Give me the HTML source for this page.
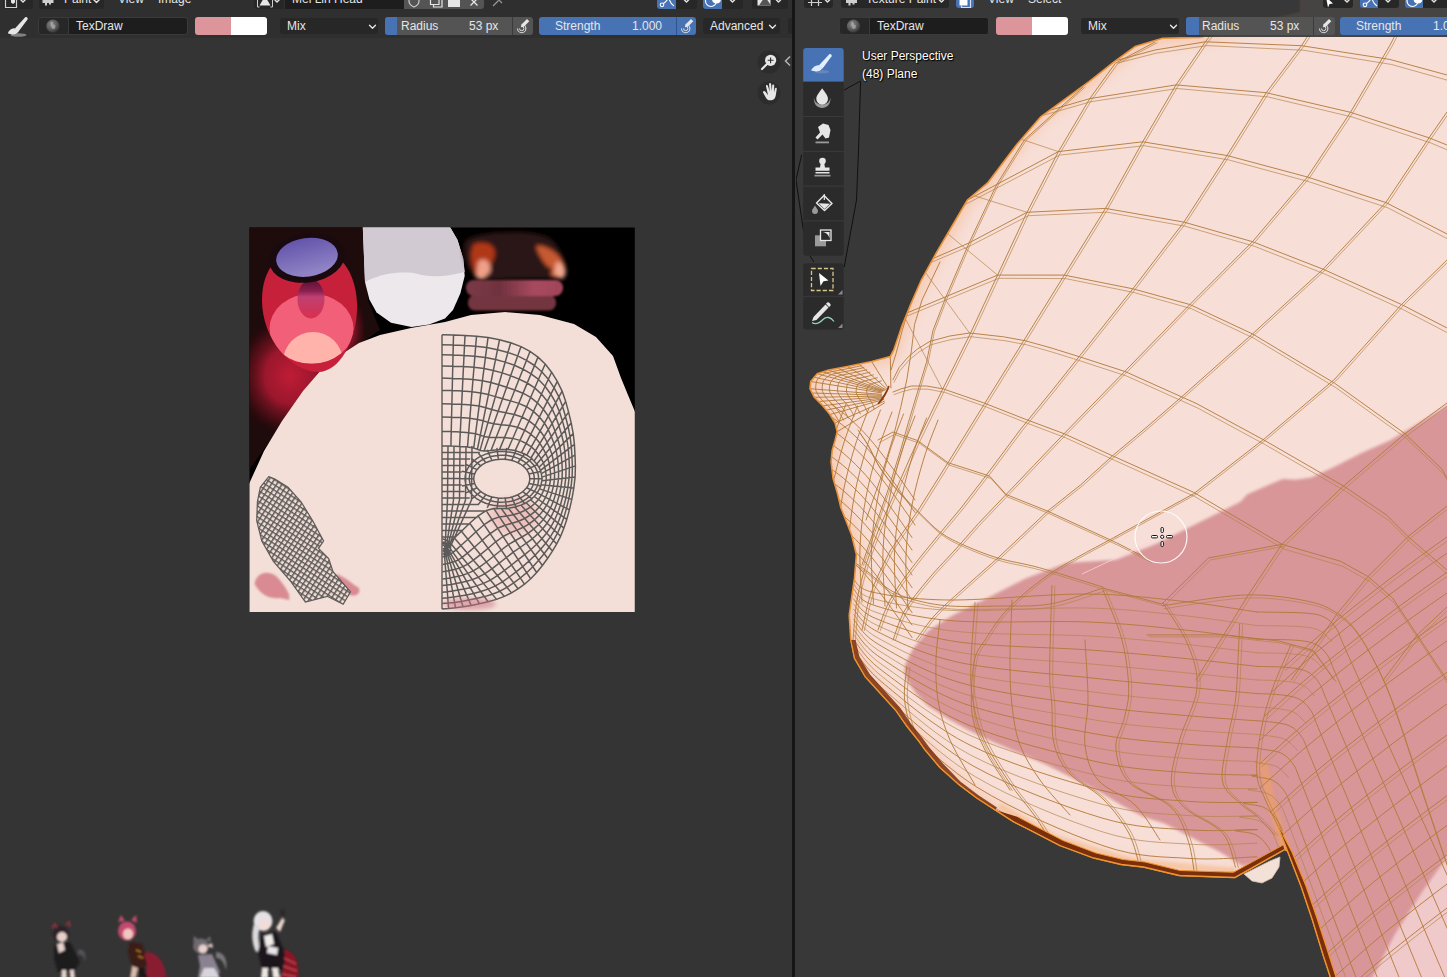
<!DOCTYPE html>
<html><head><meta charset="utf-8">
<style>
*{box-sizing:border-box;margin:0;padding:0}
html,body{width:1447px;height:977px;overflow:hidden;background:#383838;font-family:"Liberation Sans",sans-serif;font-size:12px;color:#e6e6e6}
.abs{position:absolute}
#left{position:absolute;left:0;top:0;width:792px;height:977px;background:#343434;overflow:hidden}
#right{position:absolute;left:796px;top:0;width:651px;height:977px;background:#383838;overflow:hidden}
#divider{position:absolute;left:791.6px;top:0;width:3.3px;height:977px;background:#161616}
.hdr{position:absolute;left:0;top:0;height:37.5px;background:#2f2f2f}
.w{position:absolute;border-radius:3px;white-space:nowrap;line-height:18px;height:18px;top:17px}
.dk{background:#1d1d1d}
.md{background:#272727}
.gr{background:#545454}
.bl{background:#4772b3}
.t{position:absolute;white-space:nowrap;line-height:14px}
svg{position:absolute;overflow:visible}
</style></head><body>
<div id="left">
<svg id="uv" style="left:0;top:0" width="792" height="977" viewBox="0 0 792 977">
<defs>
<clipPath id="uvclip"><rect x="249.5" y="227.5" width="385.3" height="384.5"/></clipPath>
<radialGradient id="glow" cx="0.5" cy="0.5" r="0.5"><stop offset="0" stop-color="#c01c36" stop-opacity="1"/><stop offset="0.45" stop-color="#a81830" stop-opacity="0.9"/><stop offset="0.75" stop-color="#70101c" stop-opacity="0.5"/><stop offset="1" stop-color="#300008" stop-opacity="0"/></radialGradient>
<linearGradient id="purp" x1="0" y1="0" x2="0.2" y2="1"><stop offset="0" stop-color="#5f50a8"/><stop offset="1" stop-color="#9184c6"/></linearGradient>
<linearGradient id="pupil" x1="0" y1="0" x2="0" y2="1"><stop offset="0" stop-color="#5a1030"/><stop offset="0.3" stop-color="#8a2050"/><stop offset="0.45" stop-color="#c04070"/><stop offset="1" stop-color="#d8304e"/></linearGradient>
<linearGradient id="lip1" x1="0" y1="0" x2="1" y2="0"><stop offset="0" stop-color="#7a3a48"/><stop offset="0.35" stop-color="#70323e"/><stop offset="0.7" stop-color="#a84a60"/><stop offset="1" stop-color="#a04458"/></linearGradient>
<clipPath id="pinkclip"><ellipse cx="311.500" cy="328.600" rx="42" ry="35"/></clipPath>
<clipPath id="irisclip"><path d="M309.5 248 C345 248 358 280 357 310 C356 340 340 372 318 372 C292 372 262 340 262 300 C262 268 280 248 309.5 248Z"/></clipPath>
<pattern id="grid" width="4.5" height="4.5" patternUnits="userSpaceOnUse" patternTransform="rotate(33)"><rect width="4.5" height="4.5" fill="#efdcd4"/><path d="M0 0.7H4.5M0.7 0V4.5" stroke="#5c5a58" stroke-width="1.5"/></pattern>
<pattern id="grid2" width="6.4" height="5.6" patternUnits="userSpaceOnUse" patternTransform="rotate(-4)"><rect width="6.4" height="5.6" fill="#f0ddd5"/><path d="M0 0.6H6.4M0.6 0V5.6" stroke="#5c5a58" stroke-width="1.25"/></pattern>
<filter id="b2"><feGaussianBlur stdDeviation="2"/></filter>
<filter id="b4"><feGaussianBlur stdDeviation="4"/></filter>
<filter id="b1"><feGaussianBlur stdDeviation="0.8"/></filter>
</defs>
<g clip-path="url(#uvclip)">
<rect x="249" y="227" width="387" height="386" fill="#000"/>
<!-- dark brown area behind eye -->
<path d="M249 227H364L368 300L380 330L320 372L249 470Z" fill="#1e0b0c"/>
<!-- red glow -->
<ellipse cx="290" cy="376" rx="56" ry="62" fill="url(#glow)"/>
<ellipse cx="345" cy="330" rx="22" ry="40" fill="url(#glow)" opacity="0.7"/>
<!-- skin -->
<path d="M249 484 L264 451 L282 421 L303 391 L322 369 L342 354 L359 343 L380 335 L411 328 L445 322 L471 315 L505 312 L540 315 L574 324 L596 337 L613 356 L621 378 L628 395 L636 414 V614 H249Z" fill="#f3dfd8"/>
<!-- eye -->
<g clip-path="url(#irisclip)">
<rect x="255" y="240" width="110" height="140" fill="#c6203a"/>
<ellipse cx="311.500" cy="328.600" rx="42" ry="35" fill="#f25f78"/>
<g clip-path="url(#pinkclip)"><circle cx="313" cy="362" r="30" fill="#ffb3aa"/></g>
</g>
<ellipse cx="311" cy="299" rx="13.5" ry="19.5" fill="url(#pupil)"/>
<ellipse cx="307" cy="258" rx="38" ry="24.5" fill="#190a10" transform="rotate(-8 307 258)"/>
<ellipse cx="307" cy="257.3" rx="31" ry="19.3" fill="url(#purp)" transform="rotate(-8 307 257.3)"/>
<!-- white shape -->
<path d="M362.8 227 L365 282 L369.4 299.4 L376.6 312.5 L391 322.7 L411.5 327 L429 324.5 L445 318.5 L453 310 L460.3 293.6 L464.7 276 L463.3 258.7 L457.4 239.8 L450 227Z" fill="#ece8ec"/>
<path d="M362.8 227 L365 282 C385 272 400 272 414 273 C430 278 445 277 464.7 272 L463.3 258.7 L457.4 239.8 L450 227Z" fill="#d2cad2"/>
<!-- brown hair piece -->
<g filter="url(#b2)">
<path d="M466 240 C480 230 540 228 552 240 C565 252 568 270 562 278 L478 280 C466 270 460 250 466 240Z" fill="#2c1412"/>
<path d="M474 244 C488 240 498 246 494 258 C488 270 486 280 478 278 C472 270 468 252 474 244Z" fill="#b03818"/>
<path d="M478 262 C484 256 492 262 490 272 L482 280 L476 276Z" fill="#f0a088"/>
<path d="M536 246 C548 244 566 258 566 272 C564 280 556 280 550 274 C546 262 538 256 536 246Z" fill="#c85a30"/>
<path d="M556 262 C566 262 568 276 562 279 L554 274Z" fill="#f0a890"/>
<path d="M542 262 L553 270 L550 274 L541 268Z" fill="#2c1412"/>
</g>
<!-- lips stripes -->
<g filter="url(#b1)">
<rect x="468" y="295" width="88" height="15.5" rx="7" fill="#73353f"/>
<rect x="466" y="280" width="97" height="16" rx="7.5" fill="url(#lip1)"/>
</g>
<!-- face UV -->
<ellipse cx="514" cy="516" rx="24" ry="18" fill="#e8a0a0" opacity="0.5" filter="url(#b4)"/>
<path d="M442 334.7V609" stroke="#5c5a58" stroke-width="1.4"/>
<path d="M442.0 446.0 L450.9 446.1 L459.6 446.4 L467.5 447.1 L473.7 448.1 L477.4 449.3 L480.0 450.4 L484.1 450.9 L491.0 450.5 L499.5 449.6 L507.9 449.5 L515.2 450.6 L521.5 452.7 L526.8 455.2 L530.9 458.0 L534.0 461.0 L536.8 464.1 L539.0 467.2 L540.4 470.4 L541.3 473.7 L541.9 477.1 L541.9 480.7 L541.0 484.7 L539.5 488.9 L537.2 492.9 L534.2 496.5 L530.5 499.8 L526.1 502.7 L520.9 505.1 L514.9 507.0 L508.4 508.2 L501.3 508.5 L493.9 508.6 L486.2 510.6 L478.1 515.8 L469.7 523.3 L461.4 531.2 L454.4 537.9 L450.0 542.5 L447.8 545.1 L446.6 546.3 L446.0 547.0 L445.5 547.5 L444.8 548.0 L444.0 548.5 L443.0 549.0 M442.0 431.5 L451.3 431.6 L460.3 432.0 L468.7 432.7 L475.5 433.7 L480.2 435.1 L484.0 436.4 L488.9 437.3 L496.1 437.6 L504.5 437.6 L512.7 438.4 L519.9 440.4 L526.2 443.5 L531.4 446.9 L535.4 450.7 L538.5 454.7 L541.2 458.7 L543.4 462.8 L544.8 467.0 L545.7 471.3 L546.2 475.6 L546.2 480.2 L545.3 485.1 L543.7 490.2 L541.4 495.1 L538.5 499.5 L534.9 503.4 L530.6 507.0 L525.5 510.1 L519.7 512.8 L513.5 514.8 L506.7 515.9 L499.5 516.9 L492.0 519.5 L484.1 524.7 L476.0 531.8 L467.9 539.2 L460.9 545.5 L456.1 549.9 L453.0 552.4 L450.9 553.8 L449.3 554.6 L447.8 555.2 L446.2 555.8 L444.6 556.3 L442.9 556.8 M442.0 417.1 L451.6 417.2 L461.0 417.6 L469.9 418.3 L477.4 419.4 L483.1 420.8 L488.0 422.4 L493.7 423.8 L501.1 424.7 L509.5 425.6 L517.6 427.2 L524.6 430.2 L530.8 434.2 L536.0 438.6 L539.9 443.3 L543.0 448.3 L545.7 453.4 L547.9 458.5 L549.2 463.6 L550.1 468.9 L550.6 474.2 L550.5 479.7 L549.5 485.6 L547.9 491.6 L545.6 497.3 L542.7 502.4 L539.2 507.1 L535.1 511.4 L530.2 515.2 L524.6 518.5 L518.6 521.3 L512.0 523.3 L505.0 525.2 L497.7 528.3 L490.2 533.6 L482.3 540.3 L474.4 547.2 L467.4 553.1 L462.1 557.3 L458.2 559.8 L455.2 561.3 L452.5 562.2 L450.0 562.9 L447.6 563.5 L445.2 564.1 L442.7 564.6 M442.0 403.7 L451.9 403.9 L461.7 404.3 L470.9 405.0 L479.1 406.1 L485.8 407.7 L491.7 409.5 L498.1 411.3 L505.8 412.8 L514.2 414.5 L522.1 417.0 L529.0 420.8 L535.1 425.6 L540.2 430.9 L544.1 436.5 L547.1 442.4 L549.8 448.4 L552.0 454.4 L553.3 460.5 L554.1 466.6 L554.6 472.8 L554.5 479.2 L553.5 486.0 L551.7 492.9 L549.5 499.4 L546.6 505.2 L543.2 510.5 L539.2 515.4 L534.5 519.8 L529.1 523.8 L523.3 527.3 L516.9 530.1 L510.2 532.8 L503.1 536.5 L495.7 541.8 L488.1 548.2 L480.4 554.6 L473.4 560.2 L467.7 564.1 L463.0 566.6 L459.1 568.1 L455.5 569.2 L452.1 570.0 L448.9 570.7 L445.7 571.3 L442.6 571.8 M442.0 390.4 L452.2 390.6 L462.3 391.0 L472.0 391.7 L480.8 392.9 L488.4 394.6 L495.4 396.6 L502.6 398.7 L510.5 400.9 L518.8 403.4 L526.5 406.7 L533.4 411.4 L539.4 417.0 L544.5 423.2 L548.3 429.7 L551.3 436.6 L554.0 443.5 L556.1 450.4 L557.4 457.4 L558.2 464.4 L558.6 471.5 L558.5 478.8 L557.4 486.4 L555.6 494.1 L553.3 501.4 L550.5 508.0 L547.2 513.9 L543.4 519.5 L538.8 524.5 L533.6 529.1 L528.0 533.3 L521.9 537.0 L515.3 540.5 L508.4 544.7 L501.3 550.0 L493.9 556.0 L486.4 562.0 L479.4 567.2 L473.2 570.9 L467.9 573.4 L463.0 575.0 L458.5 576.2 L454.2 577.1 L450.2 577.9 L446.3 578.5 L442.5 579.0 M442.0 378.1 L452.5 378.4 L462.9 378.8 L473.0 379.5 L482.4 380.7 L490.9 382.5 L498.7 384.8 L506.6 387.3 L514.8 390.0 L523.0 393.2 L530.6 397.3 L537.4 402.8 L543.3 409.2 L548.3 416.1 L552.1 423.5 L555.1 431.2 L557.7 438.9 L559.9 446.7 L561.1 454.5 L561.9 462.4 L562.3 470.3 L562.1 478.4 L561.0 486.8 L559.2 495.3 L556.9 503.3 L554.1 510.5 L550.9 517.1 L547.1 523.2 L542.7 528.7 L537.8 533.9 L532.3 538.8 L526.4 543.2 L520.0 547.5 L513.3 552.2 L506.4 557.5 L499.2 563.2 L491.9 568.8 L484.9 573.6 L478.4 577.2 L472.3 579.6 L466.6 581.3 L461.3 582.6 L456.2 583.6 L451.3 584.4 L446.8 585.1 L442.4 585.6 M442.0 365.9 L452.8 366.2 L463.5 366.6 L474.0 367.3 L484.0 368.6 L493.3 370.5 L502.1 372.9 L510.7 375.8 L519.1 379.1 L527.2 383.0 L534.7 387.9 L541.4 394.1 L547.3 401.3 L552.2 409.1 L555.9 417.3 L558.9 425.8 L561.5 434.4 L563.6 443.0 L564.9 451.6 L565.6 460.3 L566.0 469.0 L565.8 477.9 L564.6 487.2 L562.7 496.4 L560.4 505.2 L557.7 513.0 L554.5 520.2 L550.9 526.9 L546.7 533.0 L541.9 538.8 L536.7 544.3 L530.9 549.5 L524.7 554.6 L518.2 559.7 L511.5 565.0 L504.5 570.4 L497.4 575.6 L490.4 580.1 L483.5 583.4 L476.7 585.9 L470.3 587.7 L464.0 589.0 L458.1 590.1 L452.5 591.0 L447.3 591.7 L442.3 592.2 M442.0 354.7 L453.0 355.1 L464.0 355.5 L474.9 356.2 L485.4 357.5 L495.5 359.5 L505.2 362.1 L514.4 365.3 L523.0 369.2 L531.1 373.8 L538.5 379.4 L545.0 386.3 L550.8 394.2 L555.7 402.7 L559.4 411.6 L562.4 420.9 L565.0 430.3 L567.0 439.6 L568.3 449.0 L569.0 458.4 L569.4 467.9 L569.1 477.6 L567.9 487.5 L566.0 497.5 L563.6 506.9 L560.9 515.3 L557.9 523.0 L554.4 530.2 L550.3 536.9 L545.7 543.2 L540.6 549.3 L535.0 555.2 L529.0 561.0 L522.7 566.6 L516.1 571.9 L509.3 577.0 L502.4 581.8 L495.4 585.9 L488.1 589.1 L480.8 591.5 L473.5 593.4 L466.6 594.9 L459.9 596.1 L453.6 597.0 L447.8 597.7 L442.2 598.2 M442.0 344.7 L453.3 345.1 L464.5 345.6 L475.7 346.3 L486.7 347.6 L497.5 349.7 L507.9 352.5 L517.7 355.9 L526.5 360.3 L534.5 365.5 L541.8 371.7 L548.3 379.2 L554.1 387.8 L558.9 396.9 L562.6 406.5 L565.5 416.5 L568.1 426.6 L570.1 436.6 L571.3 446.7 L572.0 456.8 L572.4 466.9 L572.1 477.2 L570.9 487.8 L568.9 498.4 L566.5 508.4 L563.9 517.4 L560.9 525.6 L557.5 533.2 L553.5 540.4 L549.0 547.2 L544.1 553.8 L538.7 560.3 L532.8 566.7 L526.7 572.7 L520.3 578.0 L513.7 582.9 L507.0 587.3 L499.9 591.2 L492.3 594.2 L484.4 596.6 L476.5 598.6 L468.8 600.1 L461.5 601.4 L454.6 602.4 L448.2 603.1 L442.1 603.6 M442.0 334.7 L453.5 335.1 L465.0 335.6 L476.5 336.3 L488.0 337.6 L499.5 339.8 L510.7 342.8 L521.0 346.6 L530.0 351.4 L538.0 357.1 L545.2 364.0 L551.6 372.2 L557.3 381.4 L562.1 391.1 L565.7 401.4 L568.6 412.1 L571.2 422.9 L573.2 433.6 L574.4 444.4 L575.0 455.1 L575.4 465.9 L575.1 476.9 L573.8 488.1 L571.8 499.4 L569.4 509.9 L566.8 519.4 L563.9 528.1 L560.6 536.3 L556.7 543.9 L552.4 551.1 L547.7 558.3 L542.4 565.5 L536.7 572.5 L530.7 578.8 L524.5 584.2 L518.0 588.8 L511.5 592.9 L504.4 596.4 L496.5 599.4 L488.0 601.7 L479.4 603.7 L471.1 605.4 L463.0 606.7 L455.5 607.7 L448.6 608.5 L442.0 609.0 M450.9 446.1 L453.5 335.1 M459.6 446.4 L465.0 335.6 M467.5 447.1 L476.5 336.3 M473.7 448.1 L488.0 337.6 M477.4 449.3 L499.5 339.8 M480.0 450.4 L510.7 342.8 M484.1 450.9 L521.0 346.6 M491.0 450.5 L530.0 351.4 M499.5 449.6 L538.0 357.1 M507.9 449.5 L545.2 364.0 M515.2 450.6 L551.6 372.2 M521.5 452.7 L557.3 381.4 M526.8 455.2 L562.1 391.1 M530.9 458.0 L565.7 401.4 M534.0 461.0 L568.6 412.1 M536.8 464.1 L571.2 422.9 M539.0 467.2 L573.2 433.6 M540.4 470.4 L574.4 444.4 M541.3 473.7 L575.0 455.1 M541.9 477.1 L575.4 465.9 M541.9 480.7 L575.1 476.9 M541.0 484.7 L573.8 488.1 M539.5 488.9 L571.8 499.4 M537.2 492.9 L569.4 509.9 M534.2 496.5 L566.8 519.4 M530.5 499.8 L563.9 528.1 M526.1 502.7 L560.6 536.3 M520.9 505.1 L556.7 543.9 M514.9 507.0 L552.4 551.1 M508.4 508.2 L547.7 558.3 M501.3 508.5 L542.4 565.5 M493.9 508.6 L536.7 572.5 M486.2 510.6 L530.7 578.8 M478.1 515.8 L524.5 584.2 M469.7 523.3 L518.0 588.8 M461.4 531.2 L511.5 592.9 M454.4 537.9 L504.4 596.4 M450.0 542.5 L496.5 599.4 M447.8 545.1 L488.0 601.7 M446.6 546.3 L479.4 603.7 M446.0 547.0 L471.1 605.4 M445.5 547.5 L463.0 606.7 M444.8 548.0 L455.5 607.7 M444.0 548.5 L448.6 608.5 M529.8 478.7 L529.6 480.8 L529.2 482.8 L528.4 484.8 L527.3 486.8 L525.9 488.6 L524.3 490.3 L522.4 491.9 L520.2 493.4 L517.9 494.7 L515.4 495.8 L512.7 496.7 L509.9 497.4 L507.0 497.9 L504.0 498.1 L501.1 498.2 L498.1 498.0 L495.2 497.6 L492.3 497.0 L489.6 496.2 L486.9 495.2 L484.5 494.0 L482.3 492.7 L480.2 491.1 L478.5 489.5 L477.0 487.7 L475.7 485.8 L474.8 483.8 L474.2 481.8 L473.8 479.7 L473.8 477.7 L474.2 475.6 L474.8 473.6 L475.7 471.6 L477.0 469.7 L478.5 467.9 L480.2 466.3 L482.3 464.7 L484.5 463.4 L486.9 462.2 L489.6 461.2 L492.3 460.4 L495.2 459.8 L498.1 459.4 L501.1 459.2 L504.0 459.3 L507.0 459.5 L509.9 460.0 L512.7 460.7 L515.4 461.6 L517.9 462.7 L520.2 464.0 L522.4 465.5 L524.3 467.1 L525.9 468.8 L527.3 470.6 L528.4 472.6 L529.2 474.6 L529.6 476.6 L529.8 478.7Z M534.3 478.7 L534.1 481.2 L533.6 483.7 L532.7 486.1 L531.4 488.4 L529.8 490.6 L527.9 492.7 L525.7 494.6 L523.2 496.4 L520.5 497.9 L517.5 499.3 L514.4 500.4 L511.2 501.2 L507.8 501.8 L504.4 502.1 L500.9 502.2 L497.5 502.0 L494.1 501.5 L490.8 500.8 L487.6 499.8 L484.6 498.6 L481.7 497.2 L479.1 495.5 L476.8 493.7 L474.7 491.7 L473.0 489.5 L471.5 487.3 L470.4 484.9 L469.7 482.4 L469.3 480.0 L469.3 477.4 L469.7 475.0 L470.4 472.5 L471.5 470.1 L473.0 467.9 L474.7 465.7 L476.8 463.7 L479.1 461.9 L481.7 460.2 L484.6 458.8 L487.6 457.6 L490.8 456.6 L494.1 455.9 L497.5 455.4 L500.9 455.2 L504.4 455.3 L507.8 455.6 L511.2 456.2 L514.4 457.0 L517.5 458.1 L520.5 459.5 L523.2 461.0 L525.7 462.8 L527.9 464.7 L529.8 466.8 L531.4 469.0 L532.7 471.3 L533.6 473.7 L534.1 476.2 L534.3 478.7Z M538.6 478.7 L538.4 481.6 L537.8 484.5 L536.7 487.3 L535.3 490.0 L533.5 492.6 L531.3 495.0 L528.8 497.2 L526.0 499.2 L523.0 501.0 L519.6 502.6 L516.1 503.9 L512.4 504.8 L508.6 505.5 L504.7 505.9 L500.8 506.0 L496.9 505.8 L493.1 505.2 L489.3 504.4 L485.7 503.3 L482.3 501.8 L479.1 500.2 L476.1 498.3 L473.5 496.1 L471.1 493.8 L469.1 491.3 L467.5 488.6 L466.3 485.9 L465.5 483.0 L465.1 480.2 L465.1 477.2 L465.5 474.4 L466.3 471.5 L467.5 468.8 L469.1 466.1 L471.1 463.6 L473.5 461.3 L476.1 459.1 L479.1 457.2 L482.3 455.6 L485.7 454.1 L489.3 453.0 L493.1 452.2 L496.9 451.6 L500.8 451.4 L504.7 451.5 L508.6 451.9 L512.4 452.6 L516.1 453.5 L519.6 454.8 L523.0 456.4 L526.0 458.2 L528.8 460.2 L531.3 462.4 L533.5 464.8 L535.3 467.4 L536.7 470.1 L537.8 472.9 L538.4 475.8 L538.6 478.7Z M529.8 478.7 L542.8 478.7 M529.0 483.4 L541.6 486.1 M526.6 487.8 L538.1 493.1 M522.8 491.6 L532.5 499.3 M517.7 494.7 L525.1 504.2 M511.7 496.9 L516.3 507.7 M505.2 498.1 L506.7 509.5 M498.4 498.1 L496.9 509.5 M491.9 496.9 L487.3 507.7 M485.9 494.7 L478.5 504.2 M480.8 491.6 L471.1 499.3 M477.0 487.8 L465.5 493.1 M474.6 483.4 L462.0 486.1 M473.8 478.7 L460.8 478.7 M474.6 474.0 L462.0 471.3 M477.0 469.6 L465.5 464.3 M480.8 465.8 L471.1 458.1 M485.9 462.7 L478.5 453.2 M491.9 460.5 L487.3 449.7 M498.4 459.3 L496.9 447.9 M505.2 459.3 L506.7 447.9 M511.7 460.5 L516.3 449.7 M517.7 462.7 L525.1 453.2 M522.8 465.8 L532.5 458.1 M526.6 469.6 L538.1 464.3 M529.0 474.0 L541.6 471.3 M442.0 452.5 L479.9 452.5 M442.0 459.0 L470.1 459.0 M442.0 465.5 L464.7 465.5 M442.0 472.0 L461.8 472.0 M442.0 478.5 L460.8 478.5 M442.0 485.0 L461.7 485.0 M442.0 491.5 L464.5 491.5 M442.0 498.0 L469.7 498.0 M442.0 504.5 L479.1 504.5 M442.0 511.0 L484.8 511.0 M442.0 517.5 L477.6 517.5 M442.0 524.0 L470.5 524.0 M442.0 530.5 L463.4 530.5 M442.0 537.0 L456.2 537.0 M442.0 543.5 L449.1 543.5 M448.0 446.0 L447.5 500.0 L445.0 548.0 M454.0 446.0 L453.5 500.0 L446.2 548.0 M460.0 446.0 L459.5 500.0 L447.4 548.0 M466.0 446.0 L465.5 500.0 L448.6 548.0 M472.0 446.0 L471.5 500.0 L449.8 548.0 M442.5 545.0 L443.3 545.1 L444.0 545.5 L444.5 546.0 L445.0 546.8 L445.2 547.6 L445.2 548.4 L445.0 549.2 L444.5 550.0 L444.0 550.5 L443.3 550.9 L442.5 551.0 M442.5 542.0 L444.0 542.2 L445.4 543.0 L446.6 544.1 L447.4 545.5 L447.8 547.1 L447.8 548.9 L447.4 550.5 L446.6 551.9 L445.4 553.0 L444.0 553.8 L442.5 554.0 M442.5 539.0 L444.8 539.4 L446.9 540.4 L448.6 542.1 L449.9 544.3 L450.5 546.7 L450.5 549.3 L449.9 551.7 L448.6 553.9 L446.9 555.6 L444.8 556.6 L442.5 557.0" fill="none" stroke="#5c5a58" stroke-width="1.5" stroke-linejoin="round"/>
<ellipse cx="470" cy="604" rx="26" ry="6" fill="#c87080" opacity="0.5" filter="url(#b2)"/>
<!-- pink blobs -->
<path d="M254.5 584 C256 574 266 569 276 576 C282 582 286 588 289 594 L289.4 600 L280 598 C272 599 262 597 254.5 584Z" fill="#d98a92" filter="url(#b1)"/>
<path d="M336 574 C344 576 352 584 359 588 C361 594 355 598 348 594 L338 586Z" fill="#d98a92" filter="url(#b1)"/>
<!-- ear UV -->
<path d="M268.7 476.6 L274.9 479 L288 487.3 L301 501.8 L312.7 520.7 L323.6 541 L318.5 548.3 L328.7 558.5 L333 571.6 L350.5 591.9 L343.2 604.3 L327.2 596.3 L305.4 602.1 L290.9 581.7 L273.4 561.4 L261.8 541 L256.7 520.7 L257.4 501.8 L260.3 487.3Z" fill="url(#grid)" stroke="#5c5a58" stroke-width="1.2"/>
</g>
</svg>

<svg style="left:0;top:0" width="792" height="977" viewBox="0 0 792 977">
<defs><filter id="cb"><feGaussianBlur stdDeviation="0.9"/></filter></defs>
<g filter="url(#cb)">
<!-- char 1 -->
<ellipse cx="61" cy="934" rx="8" ry="8" fill="#2a2428"/>
<ellipse cx="62" cy="937" rx="5" ry="5" fill="#e8cfc8"/>
<path d="M55 944 L70 942 L80 962 L74 972 L58 972 L54 958Z" fill="#1c1a1e"/>
<path d="M57 944 l6 -2 l2 8 l-6 3z" fill="#e6d2cc"/>
<path d="M78 950 c6 -2 9 4 7 12 c-1 -6 -3 -8 -7 -7z" fill="#55505a"/>
<path d="M62 970 l4 0 l1 8 l-6 0z M70 970 l4 0 l1 8 l-5 0z" fill="#e6d2cc"/>
<path d="M52 928 l3 -4 l2 4 M66 925 l3 -3 l1 5" stroke="#a03040" stroke-width="1.500" fill="none"/>
<!-- char 2 -->
<ellipse cx="127" cy="931" rx="9" ry="9.500" fill="#c44a70"/>
<ellipse cx="128" cy="934" rx="5" ry="5.500" fill="#f0c8c0"/>
<path d="M118 922 l3 -7 l4 6 M131 920 l5 -5 l1 8" fill="#c44a70"/>
<path d="M130 942 L142 944 L148 962 L142 972 L132 966 L128 952Z" fill="#3a1a18"/>
<path d="M146 952 c12 0 20 12 20 26 l-22 0 c4 -8 4 -16 0 -22z" fill="#8a1c30"/>
<path d="M132 966 l6 2 l-2 10 l-6 0z" fill="#d8b8a8"/>
<path d="M138 968 l6 0 l4 10 l-8 0z" fill="#1e1416"/>
<path d="M136 950 l5 2 M138 956 l5 2" stroke="#d89030" stroke-width="1.200"/>
<!-- char 3 -->
<ellipse cx="201" cy="946" rx="8" ry="7.500" fill="#6e6a70"/>
<ellipse cx="203" cy="949" rx="4.500" ry="4.500" fill="#e8d0cc"/>
<path d="M193 942 l1 -6 l5 4 M206 940 l4 -4 l1 6" fill="#6e6a70"/>
<path d="M198 955 L212 954 L220 972 L216 978 L198 978 L200 966Z" fill="#8a8290"/>
<path d="M204 968 l10 0 l6 10 l-20 0z" fill="#d8d4dc"/>
<path d="M216 952 c8 0 12 8 10 18 c-2 -8 -5 -12 -10 -12z" fill="#7a767c"/>
<path d="M207 946 l5 -3 l1 5z" fill="#e8d0cc"/>
<!-- char 4 -->
<ellipse cx="263" cy="921" rx="9.500" ry="10" fill="#e4e0e4"/>
<ellipse cx="265" cy="925" rx="5" ry="5.500" fill="#f4dcd6"/>
<path d="M254 924 c-3 10 -2 20 2 28 l5 -2 c-3 -8 -3 -16 -1 -24z" fill="#dcd8dc"/>
<path d="M262 934 L276 932 L282 946 L290 960 L284 970 L262 970 L258 952Z" fill="#1a181c"/>
<path d="M264 936 l8 -2 l2 10 l-8 3z" fill="#f0ece8"/>
<path d="M268 946 l10 2 l-1 7 l-10 -2z" fill="#e8e4e8"/>
<path d="M276 928 l6 -10 l3 2 l-5 12z" fill="#e8d4cc"/>
<path d="M280 912 l3 -3 l2 4 l-2 5z" fill="#2a262a"/>
<path d="M284 950 c10 0 16 12 14 28 l-18 0 c4 -8 6 -18 4 -28z" fill="#8a1424"/>
<path d="M284 958 l12 6 M283 966 l14 5 M282 974 l14 3" stroke="#d06070" stroke-width="1"/>
<path d="M262 968 l6 0 l0 10 l-7 0z M272 968 l6 0 l2 10 l-7 0z" fill="#ece4e0"/>
</g>
</svg>

<div class="hdr" style="width:792px"></div>
<!-- top row (cropped) -->
<div class="abs md" style="left:3px;top:-8px;width:30px;height:17px;border-radius:3px"></div>
<div class="abs md" style="left:39px;top:-8px;width:65px;height:17px;border-radius:3px"></div>
<div class="t" style="left:64px;top:-8px">Paint</div>
<div class="t" style="left:118px;top:-8px">View</div>
<div class="t" style="left:158px;top:-8px">Image*</div>
<div class="abs md" style="left:254px;top:-8px;width:30px;height:17px;border-radius:3px 0 0 3px"></div>
<div class="abs dk" style="left:285px;top:-8px;width:119px;height:17px"></div>
<div class="t" style="left:292px;top:-8px">Mel Lin Head</div>
<div class="abs gr" style="left:404px;top:-8px;width:80px;height:17px;border-radius:0 3px 3px 0"></div>
<div class="abs bl" style="left:657px;top:-8px;width:19px;height:17px;border-radius:3px 0 0 3px"></div>
<div class="abs md" style="left:676px;top:-8px;width:21px;height:17px;border-radius:0 3px 3px 0"></div>
<div class="abs bl" style="left:703px;top:-8px;width:19px;height:17px;border-radius:3px 0 0 3px"></div>
<div class="abs md" style="left:722px;top:-8px;width:21px;height:17px;border-radius:0 3px 3px 0"></div>
<div class="abs md" style="left:752px;top:-8px;width:36px;height:17px;border-radius:3px"></div>
<!--LTOPICONS-->
<!-- tool settings row -->
<!--BRUSHICON-->
<div class="w md" style="left:38px;width:31px;border-radius:3px 0 0 3px;border:1px solid #3a3a3a"></div>
<div class="w dk" style="left:69px;width:119px;border-radius:0 3px 3px 0;border:1px solid #3a3a3a;border-left:none"></div>
<div class="t" style="left:76px;top:19px">TexDraw</div>
<div class="w" style="left:195px;width:36px;background:#dc959b;border-radius:3px 0 0 3px"></div>
<div class="w" style="left:231px;width:36px;background:#fff;border-radius:0 3px 3px 0"></div>
<div class="w md" style="left:280px;width:98px;top:18px;height:16px"></div>
<div class="t" style="left:287px;top:19px">Mix</div>
<div class="w gr" style="left:385px;width:148px"></div>
<div class="w bl" style="left:385px;width:12px;border-radius:3px 0 0 3px"></div>
<div class="abs" style="left:512px;top:17px;width:1px;height:18px;background:#3a3a3a"></div>
<div class="t" style="left:401px;top:19px">Radius</div>
<div class="t" style="left:469px;top:19px">53 px</div>
<div class="w bl" style="left:539px;width:157px"></div>
<div class="abs" style="left:676px;top:17px;width:1px;height:18px;background:#33548a"></div>
<div class="t" style="left:555px;top:19px">Strength</div>
<div class="t" style="left:632px;top:19px">1.000</div>
<div class="w md" style="left:703px;width:77px;top:18px;height:16px"></div>
<div class="t" style="left:710px;top:19px">Advanced</div>
<div class="w md" style="left:788px;width:10px;top:18px;height:16px"></div>
<svg style="left:0;top:0" width="792" height="40" viewBox="0 0 792 40">
<defs><radialGradient id="sph" cx="0.4" cy="0.35" r="0.7"><stop offset="0" stop-color="#8a8a8a"/><stop offset="0.6" stop-color="#585858"/><stop offset="1" stop-color="#2e2e2e"/></radialGradient></defs>
<!-- brush icon -->
<ellipse cx="18.500" cy="35" rx="8" ry="1.800" fill="#8a8a8a" opacity="0.9"/>
<path d="M25.200 17.300 C26.500 16.400 28.300 18 27.500 19.400 L18.300 31.800 L14.500 29Z" fill="#e6e6e6"/>
<path d="M14.700 28.400 C11.500 28 9 30.300 7.800 33.300 C11 34.800 16.500 35.300 18.600 31.500Z" fill="#e6e6e6"/>
<!-- brush thumb -->
<circle cx="52.900" cy="26.200" r="6.600" fill="url(#sph)"/>
<path d="M50.500 22.500 l2 -1 l1 3 l2 1 l-0.500 3 l-2.500 0.500 l-1.500 -2.500z" fill="#b0b0b0" opacity="0.7"/>
<!-- chevrons -->
<g fill="none" stroke="#e6e6e6" stroke-width="1.400" stroke-linecap="round" stroke-linejoin="round">
<path d="M369.500 25.200 l3 3 l3 -3"/>
<path d="M769.500 25.200 l3 3 l3 -3"/>
<path d="M93 -1 l3.500 3.500 l3.500 -3.500"/>
<path d="M273.500 -1.500 l3.500 3.500 l3.500 -3.500"/>
<path d="M19.500 -1.500 l3.500 3.500 l3.500 -3.500"/>
<path d="M683 -1.500 l3.500 3.500 l3.500 -3.500"/>
<path d="M729 -1.500 l3.500 3.500 l3.500 -3.500"/>
<path d="M775 -1.500 l3.500 3.500 l3.500 -3.500"/>
</g>
<!-- pen/pressure icons -->
<g id="pen">
<path d="M517.500 28.500 A4.200 4.200 0 1 0 521.700 24.300" fill="none" stroke="#dcdcdc" stroke-width="1.100"/>
<path d="M519.500 28.500 A2.200 2.200 0 1 0 521.700 26.300" fill="none" stroke="#dcdcdc" stroke-width="1"/>
<path d="M520.800 27.200 L521.500 24.500 L527 19 L529.300 21.300 L523.800 26.800Z" fill="#e6e6e6"/>
</g>
<use href="#pen" x="164"/>
<!-- top row partial icons -->
<path d="M5.500 -4 v11.500 h11 v-11.500" fill="none" stroke="#cfcfcf" stroke-width="1.200"/>
<path d="M11 -3 h4 v5.500 l-2 1.500 l-2 -1.500z" fill="#e6e6e6"/>
<path d="M42.500 -2 h11 v5 h-2.500 v1.500 h-2 v-1.500 h-2 v2.500 h-2 v-2.500 h-2.500z" fill="#cfcfcf"/>
<path d="M259.500 5.500 L265 -4 L270.500 5.500Z" fill="#e6e6e6"/>
<path d="M257.500 -3 v10 h2 M272.500 -3 v10 h-2" fill="none" stroke="#cfcfcf" stroke-width="1"/>
<!-- image field buttons -->
<path d="M409 -3 v4 c0 3 2.500 5 5 6 c2.500 -1 5 -3 5 -6 v-4" fill="none" stroke="#cfcfcf" stroke-width="1.200"/>
<path d="M430.500 -3 v7.500 h8.500 v-7.500 M433.500 4.500 v2.500 h8.500 v-8" fill="none" stroke="#e6e6e6" stroke-width="1.200"/>
<rect x="448" y="-3" width="12" height="10" fill="#e6e6e6"/>
<path d="M470.500 -1.500 l7 7 M477.500 -1.500 l-7 7" stroke="#e6e6e6" stroke-width="1.300"/>
<path d="M493 6 l5.500 -5.500 M496 -3 l6 6 M497.500 -2 l4 -2" stroke="#9a9a9a" stroke-width="1.200" fill="none"/>
<!-- right side top icons -->
<circle cx="662" cy="4.800" r="1.800" fill="none" stroke="#fff" stroke-width="1.100"/>
<path d="M663.500 3.500 C667 1 668.500 -2 668.500 -4 M668.500 -4 C669 0 671 4 674 6" fill="none" stroke="#fff" stroke-width="1.100"/>
<circle cx="711" cy="1" r="5.500" fill="none" stroke="#fff" stroke-width="1.200"/>
<circle cx="716.500" cy="-1" r="4.500" fill="#fff"/>
<path d="M757.500 5.500 v-10 h13 v10z" fill="#e6e6e6"/>
<path d="M759 5.500 l6 -9 l6 9z" fill="#555"/>
</svg>
<!-- nav gizmos -->
<svg style="left:0;top:0" width="792" height="120" viewBox="0 0 792 120">
<circle cx="769" cy="62" r="11.500" fill="#2c2c2c" opacity="0.85"/>
<circle cx="769" cy="93" r="11.500" fill="#2c2c2c" opacity="0.85"/>
<circle cx="770.600" cy="60.300" r="5.600" fill="#e6e6e6"/>
<path d="M766.500 64.500 l-4.500 4.500" stroke="#e6e6e6" stroke-width="2.200" stroke-linecap="round"/>
<path d="M767.700 60.300 h5.800 M770.600 57.400 v5.800" stroke="#2c2c2c" stroke-width="1.100"/>
<path d="M786 56.500 l4.500 4.500 l-4.500 4.500" transform="rotate(180 788 61)" fill="none" stroke="#b5b5b5" stroke-width="1.500"/>
<!-- hand -->
<path d="M763 92.500 l2.800 5 c1 2 2.500 2.800 4.500 2.800 c3.500 0 5 -2 5.500 -5 l1 -6.500 c0.200 -1.300 -1.500 -1.600 -1.800 -0.300 l-1 4 l0.200 -7 c0 -1.400 -2 -1.400 -2 0 l-0.300 6 l-0.800 -7.500 c-0.200 -1.400 -2.100 -1.200 -2 0.200 l0.600 7.500 l-1.800 -6 c-0.400 -1.300 -2.200 -0.800 -1.900 0.600 l2 9 l-2.700 -3.800 c-1 -1.200 -2.800 -0.200 -2.300 1z" fill="#e6e6e6"/>
</svg>

</div>
<div id="divider"></div>
<div id="right">
<svg id="mesh" style="left:-796px;top:0" width="1447" height="977" viewBox="0 0 1447 977">
<defs>
<clipPath id="headclip"><path id="headpath" d="M1300.0 12.0 L1200.0 37.4 L1162.6 38.3 L1135.0 46.6 L1114.7 61.3 L1089.0 81.6 L1041.0 116.6 L1017.0 144.2 L987.6 182.9 L967.4 200.0 L952.1 226.0 L936.7 252.2 L921.4 279.8 L910.7 304.4 L901.4 327.4 L893.8 350.0 L890.3 356.5 L871.6 361.5 L847.3 366.5 L828.7 370.0 L817.2 373.7 L810.7 381.5 L810.0 388.7 L814.3 397.3 L822.9 405.9 L830.0 414.5 L835.1 423.0 L837.2 431.7 L835.1 440.3 L832.2 450.3 L831.1 461.8 L833.1 478.6 L837.5 493.5 L840.9 507.8 L851.6 535.0 L856.4 554.5 L854.5 577.9 L850.6 605.0 L849.2 615.3 L850.7 638.4 L854.6 658.3 L865.3 676.7 L880.7 693.6 L896.0 710.5 L906.7 725.9 L919.0 741.2 L925.2 750.0 L940.0 767.5 L958.4 784.0 L976.8 797.9 L995.2 809.9 L1013.7 821.8 L1032.0 831.0 L1060.0 845.5 L1093.7 858.0 L1121.4 864.5 L1143.5 867.0 L1179.4 875.5 L1234.7 877.5 L1284.5 849.5 L1287.5 851.0 L1301.3 886.7 L1312.4 919.8 L1323.4 955.8 L1330.4 977.0 L1338.0 1000.0 L1480.0 1000.0 L1480.0 -20.0 L1300.0 -20.0Z"/></clipPath>
<filter id="mb2"><feGaussianBlur stdDeviation="1.6"/></filter>
<filter id="mb6"><feGaussianBlur stdDeviation="6"/></filter>
</defs>
<use href="#headpath" fill="#f7dfd7"/>
<g clip-path="url(#headclip)">
<use href="#headpath" fill="none" stroke="#f6b48a" stroke-width="14" opacity="0.45" filter="url(#mb6)"/>
<path filter="url(#mb2)" d="M1460.0 398.0 L1447.0 405.8 L1419.0 423.0 L1390.3 440.2 L1361.6 453.0 L1333.0 467.4 L1311.5 477.4 L1295.8 479.7 L1282.8 478.9 L1268.0 485.2 L1247.0 494.6 L1240.5 501.8 L1213.0 515.6 L1185.0 529.4 L1157.6 543.3 L1116.0 559.8 L1066.6 563.0 L1025.0 578.7 L983.5 600.0 L952.8 615.3 L928.2 630.7 L912.9 649.0 L905.2 664.5 L904.5 672.0 L906.7 679.8 L916.0 693.6 L928.2 705.9 L946.7 718.0 L968.1 730.0 L991.0 741.0 L1047.0 765.0 L1100.0 792.0 L1121.0 805.0 L1144.0 817.0 L1164.5 823.4 L1183.0 833.0 L1201.0 842.5 L1220.0 852.0 L1243.0 866.0 L1262.0 861.0 L1285.0 848.0 L1290.0 860.0 L1330.0 990.0 L1380.0 990.0 L1447.0 880.0 L1460.0 860.0Z" fill="#d89699"/>
<path id="creaseglow" d="M1262 760 L1272 805 L1284 845 L1300 888 L1316 935 L1330 977" fill="none" stroke="#f2a25c" stroke-width="9" opacity="0.55" filter="url(#mb2)"/>
<path d="M1000 806 L1055 838 L1135 862 L1235 871" fill="none" stroke="#f6b070" stroke-width="6" opacity="0.4" filter="url(#mb2)"/>
<path filter="url(#mb2)" d="M1366 990 L1395 934 L1422 892 L1447 857 L1460 840 L1460 990Z" fill="#f0caca"/>
</g>
<g clip-path="url(#headclip)"><g fill="none" stroke-linejoin="round" stroke-linecap="round"><path d="M1157.3 42.6 L1117.6 63.9 L1092.1 99.2 L1060.7 152.2 L1029.3 212.9 L999.9 275.7 L972.5 334.5 L944.8 390.0 L920.0 441.2 L899.2 488.2 L881.2 529.6 M881.2 529.6 C879.0 535.6 871.9 553.8 868.3 565.6 C864.6 577.4 861.5 588.1 859.3 600.6 C857.1 613.1 856.0 633.9 855.3 640.6 M1224.3 20.6 L1207.7 42.4 L1178.3 85.5 L1145.0 142.4 L1107.8 209.0 L1066.6 275.7 L1025.4 342.3 L986.3 405.2 L950.3 463.3 L920.0 511.6 L892.3 551.6 M892.3 551.6 C889.3 558.1 879.0 577.4 874.3 590.6 C869.6 603.8 866.0 623.9 864.3 630.6 M1320.3 20.6 L1303.8 46.3 L1268.5 93.3 L1229.3 156.1 L1186.2 222.7 L1135.2 289.4 L1082.3 356.1 L1055.3 390.0 L1022.3 430.6 L991.8 471.6 L964.2 507.5 L938.3 538.6 M938.3 538.6 C934.3 543.6 922.1 558.0 914.4 568.3 C906.7 578.6 898.0 590.2 892.3 600.6 C886.6 611.0 882.3 625.6 880.3 630.6 M1405.3 20.6 L1392.0 46.3 L1352.8 112.9 L1309.7 177.6 L1254.8 242.3 L1192.1 305.1 L1127.4 371.7 L1066.4 434.3 L1036.0 466.1 L1008.4 495.1 L980.7 524.1 L957.3 550.6 M957.3 550.6 C952.9 555.4 939.3 569.4 931.0 579.4 C922.7 589.4 913.2 600.4 907.3 610.6 C901.3 620.8 897.3 635.6 895.3 640.6 M1449.3 112.6 L1431.3 138.4 L1388.1 203.1 L1325.4 269.8 L1254.8 334.5 L1184.2 397.2 L1149.4 427.4 L1114.8 456.4 L1083.0 485.4 L1049.9 511.7 L1025.0 535.2 L1000.1 558.7 M1000.1 558.7 C994.1 564.0 974.7 581.0 964.2 590.5 C953.7 600.0 944.9 607.2 937.3 615.6 C929.6 624.0 921.5 636.4 918.3 640.6 M1085.1 87.1 L1026.0 140.3 L998.3 184.9 L970.7 243.3 L947.7 297.0 L934.5 331.1 L928.3 361.8 L919.1 392.4 L909.9 423.2 L902.3 450.4 L889.6 490.4 L875.6 530.4 M875.6 530.4 L863.6 565.4 M1449.3 260.6 L1403.8 305.1 L1337.2 379.6 L1266.6 439.4 L1196.0 494.3 L1117.6 537.4 M1117.6 537.4 C1107.1 543.3 1072.5 560.9 1054.8 572.7 C1037.1 584.5 1022.9 596.7 1011.7 608.0 C1000.4 619.3 993.2 631.5 987.3 640.6 C981.4 649.8 978.6 650.7 976.4 662.9 C974.2 675.1 972.5 699.0 974.3 713.6 C976.1 728.2 981.0 737.8 987.3 750.6 C993.6 763.4 1008.1 783.9 1012.3 790.6 M1117.7 63.0 L1156.2 53.2 L1206.9 45.6 L1303.2 50.2 L1391.7 64.5 L1449.2 80.7 M1021.0 121.6 L1091.0 101.7 L1177.4 88.5 L1267.8 96.9 L1352.3 117.0 L1431.0 143.0 L1449.2 150.7 M963.0 205.6 L997.9 187.5 L1059.7 155.1 L1144.2 145.7 L1228.7 159.9 L1309.3 181.8 L1387.8 207.8 L1449.2 239.7 M926.0 264.6 L970.2 245.9 L1028.3 215.7 L1107.0 212.2 L1185.5 226.3 L1254.2 246.2 L1325.0 274.1 L1403.5 309.8 L1449.2 333.7 M896.0 320.6 L947.2 299.5 L998.8 278.3 L1065.7 278.6 L1134.4 292.6 L1191.4 308.7 L1254.2 338.4 L1336.1 387.8 L1407.0 438.8 L1443.9 474.4 L1449.2 483.7 M894.0 382.4 L900.2 370.3 L909.4 359.8 L918.7 352.2 L931.1 344.7 L951.2 339.5 L971.1 336.7 L1005.0 340.7 L1026.6 344.8 L1051.6 351.9 L1079.7 360.7 L1126.8 376.1 L1197.8 408.1 L1265.6 444.9 L1345.5 491.2 L1388.6 520.4 L1410.1 542.1 L1449.2 575.7 M894.0 394.6 L901.8 391.8 L912.6 389.0 L927.9 389.2 L944.9 392.4 L984.9 406.4 L1028.0 423.5 L1065.7 437.8 L1114.1 460.1 L1194.7 496.5 L1283.8 549.0 L1342.3 566.1 L1370.0 581.6 L1394.6 603.3 L1419.3 640.4 L1449.2 685.7 M879.5 442.5 L894.5 434.5 L919.2 443.1 L949.5 465.2 L991.0 478.5 L1007.6 497.0 L1049.1 513.6 L1118.2 545.3 L1151.5 562.5 M859.5 432.5 C861.1 435.0 865.9 441.5 869.4 447.5 C872.9 453.5 875.6 461.1 880.4 468.5 C885.2 475.9 891.9 484.6 898.4 492.1 C904.9 499.6 912.0 506.5 919.1 513.5 C926.2 520.5 933.8 528.8 941.2 534.3 C948.6 539.8 953.7 542.3 963.4 546.7 C973.1 551.1 986.4 556.6 999.3 560.5 C1012.2 564.4 1023.3 565.4 1040.8 570.2 C1058.3 575.0 1093.7 586.3 1104.3 589.5 M1058.4 151.6 L1017.0 137.8 M1027.0 212.3 L975.0 196.0 M997.6 275.1 L948.0 234.0 M970.2 333.9 L925.0 272.0 M942.5 389.4 L905.0 318.0 M852.5 563.0 C855.3 565.0 863.0 570.0 869.5 575.0 C876.0 580.0 883.7 588.3 891.5 593.0 C899.3 597.7 906.5 600.3 916.5 603.0 C926.5 605.7 937.3 608.0 951.5 609.0 C965.7 610.0 984.8 609.3 1001.5 609.0 C1018.2 608.7 1034.3 610.0 1051.5 607.0 C1068.7 604.0 1095.7 593.7 1104.5 591.0 M853.1 583.2 C856.4 585.8 856.5 594.1 872.9 598.6 C889.3 603.1 915.8 608.8 951.5 610.4 C987.2 612.0 1048.8 607.2 1087.0 608.0 C1125.2 608.8 1152.2 612.4 1180.5 615.3 C1208.8 618.2 1244.2 623.9 1257.0 625.6 M853.3 593.6 C856.9 596.6 857.8 605.5 874.7 611.8 C891.6 618.1 918.8 627.2 954.5 631.2 C990.2 635.2 1051.2 633.9 1089.0 636.0 C1126.8 638.1 1153.5 641.1 1181.5 643.9 C1209.5 646.7 1244.4 651.3 1257.0 652.8 M853.5 604.0 C857.3 607.5 859.2 617.0 876.5 625.0 C893.8 633.0 921.8 645.5 957.5 652.0 C993.2 658.5 1053.5 660.6 1091.0 664.0 C1128.5 667.4 1154.8 669.8 1182.5 672.5 C1210.2 675.2 1244.6 678.8 1257.0 680.0 M853.7 614.4 C857.8 618.4 860.5 628.5 878.3 638.2 C896.1 647.9 924.7 663.8 960.5 672.8 C996.3 681.8 1055.8 687.3 1093.0 692.0 C1130.2 696.7 1156.2 698.6 1183.5 701.1 C1210.8 703.6 1244.8 706.2 1257.0 707.2 M853.9 624.8 C858.3 629.2 861.8 639.9 880.1 651.4 C898.4 662.9 927.7 682.2 963.5 693.6 C999.3 705.0 1058.2 714.0 1095.0 720.0 C1131.8 726.0 1157.5 727.3 1184.5 729.7 C1211.5 732.1 1244.9 733.6 1257.0 734.4 M854.1 635.2 C858.7 640.1 863.2 651.4 881.9 664.6 C900.6 677.8 930.6 700.5 966.5 714.4 C1002.4 728.3 1060.5 740.7 1097.0 748.0 C1133.5 755.3 1158.8 756.0 1185.5 758.3 C1212.2 760.6 1245.1 761.0 1257.0 761.6 M854.3 645.6 C859.2 651.0 864.5 662.9 883.7 677.8 C902.9 692.7 933.6 718.8 969.5 735.2 C1005.4 751.6 1062.8 767.4 1099.0 776.0 C1135.2 784.6 1160.2 784.8 1186.5 786.9 C1212.8 789.0 1245.2 788.5 1257.0 788.8 M854.5 656.0 C859.7 661.8 865.8 674.3 885.5 691.0 C905.2 707.7 936.6 737.2 972.5 756.0 C1008.4 774.8 1065.2 794.1 1101.0 804.0 C1136.8 813.9 1161.5 813.5 1187.5 815.5 C1213.5 817.5 1245.4 815.9 1257.0 816.0 M854.7 666.4 C860.1 672.7 867.2 685.8 887.3 704.2 C907.4 722.6 939.5 755.5 975.5 776.8 C1011.5 798.1 1067.5 820.8 1103.0 832.0 C1138.5 843.2 1162.8 842.2 1188.5 844.1 C1214.2 846.0 1245.6 843.4 1257.0 843.2 M854.9 676.8 C860.6 683.6 868.5 697.3 889.1 717.4 C909.7 737.5 942.5 773.8 978.5 797.6 C1014.5 821.4 1069.8 847.5 1105.0 860.0 C1140.2 872.5 1164.2 871.0 1189.5 872.7 C1214.8 874.4 1245.8 870.8 1257.0 870.4 M909.8 667.2 C909.4 672.9 906.3 689.2 907.7 701.3 C909.1 713.3 912.3 726.0 918.3 739.5 C924.3 753.0 939.6 775.3 943.9 782.5 M978.0 603.2 C977.3 613.9 974.1 650.9 973.8 667.2 C973.5 683.6 973.9 689.2 976.0 701.3 C978.1 713.3 980.6 726.0 986.6 739.5 C992.6 753.0 1003.5 769.7 1012.0 782.5 C1020.5 795.3 1031.0 806.8 1037.8 816.5 C1044.6 826.2 1050.5 836.5 1053.0 840.5 M1054.9 586.1 C1054.5 600.3 1052.7 651.6 1052.7 671.5 C1052.7 691.4 1054.2 693.4 1054.9 705.5 C1055.6 717.6 1054.2 732.7 1057.0 744.0 C1059.8 755.3 1063.8 764.2 1072.0 773.5 C1080.2 782.8 1096.0 789.5 1106.0 799.5 C1116.0 809.5 1125.5 822.0 1131.7 833.5 C1137.9 845.0 1141.1 862.7 1143.0 868.5 M1106.0 590.4 C1109.2 598.8 1120.7 624.1 1125.0 640.5 C1129.3 656.9 1131.3 675.5 1131.7 688.5 C1132.1 701.5 1129.5 708.4 1127.4 718.4 C1125.3 728.4 1118.2 737.5 1118.9 748.2 C1119.6 758.9 1122.5 772.4 1131.7 782.4 C1141.0 792.4 1164.5 798.0 1174.4 808.0 C1184.4 818.0 1187.5 830.4 1191.4 842.1 C1195.3 853.9 1196.9 872.4 1198.0 878.5 M1165.8 603.2 C1170.0 610.2 1185.3 631.3 1191.0 645.5 C1196.7 659.7 1201.3 672.8 1200.0 688.5 C1198.7 704.2 1187.2 723.9 1182.9 739.5 C1178.6 755.1 1173.7 771.0 1174.4 782.4 C1175.1 793.8 1178.7 799.5 1187.2 808.0 C1195.7 816.5 1217.1 823.6 1225.6 833.5 C1234.1 843.4 1236.3 861.8 1238.4 867.5 M1242.6 624.5 C1242.3 630.5 1241.7 647.7 1241.0 660.5 C1240.3 673.3 1240.3 687.4 1238.4 701.3 C1236.5 715.2 1231.9 730.5 1229.8 744.0 C1227.7 757.5 1223.5 772.5 1225.6 782.4 C1227.7 792.3 1236.9 797.8 1242.6 803.5 C1248.3 809.2 1253.8 811.2 1259.7 816.5 C1265.6 821.8 1275.0 832.3 1278.0 835.5 M1293.8 645.5 C1290.7 653.0 1280.0 676.2 1275.0 690.5 C1270.0 704.8 1266.5 717.4 1264.0 731.2 C1261.5 745.0 1259.0 762.1 1259.7 773.5 C1260.4 784.9 1264.1 790.0 1268.0 799.5 C1271.9 809.0 1280.5 825.3 1283.0 830.5 M1105.0 590.0 L1164.0 606.0 L1210.4 560.0 L1284.0 546.3 M1149.0 636.9 L1225.8 636.9 L1281.0 643.0 L1314.8 652.2 L1336.3 682.0 M1257.0 625.6 C1264.1 625.8 1289.2 625.8 1299.7 626.6 C1310.2 627.4 1314.4 628.1 1319.7 630.6 C1325.0 633.1 1329.7 639.8 1331.7 641.6 M1257.0 652.8 C1262.7 653.0 1282.1 653.0 1291.1 653.8 C1300.1 654.6 1305.8 655.3 1311.1 657.8 C1316.4 660.3 1321.1 667.0 1323.1 668.8 M1257.0 680.0 C1261.2 680.2 1274.9 680.2 1282.5 681.0 C1290.1 681.8 1297.2 682.5 1302.5 685.0 C1307.8 687.5 1312.5 694.2 1314.5 696.0 M1257.0 707.2 C1259.8 707.4 1267.8 707.4 1273.9 708.2 C1280.1 709.0 1288.6 709.7 1293.9 712.2 C1299.2 714.7 1303.9 721.4 1305.9 723.2 M1257.0 734.4 C1258.4 734.6 1260.6 734.6 1265.3 735.4 C1270.0 736.2 1280.0 736.9 1285.3 739.4 C1290.6 741.9 1295.3 748.6 1297.3 750.4 M1257.0 761.6 C1257.0 761.8 1253.4 761.8 1256.7 762.6 C1260.0 763.4 1271.4 764.1 1276.7 766.6 C1282.0 769.1 1286.7 775.8 1288.7 777.6 M1257.0 788.8 C1255.5 789.0 1246.2 789.0 1248.1 789.8 C1249.9 790.6 1262.8 791.3 1268.1 793.8 C1273.4 796.3 1276.8 800.0 1280.1 804.8 C1283.4 809.6 1283.0 809.8 1288.1 822.8 C1293.2 835.8 1303.0 862.8 1310.4 882.8 C1317.9 902.8 1325.3 922.8 1332.7 942.8 C1340.2 962.8 1351.3 992.8 1355.1 1002.8 M1257.0 816.0 C1254.1 816.2 1239.1 816.2 1239.5 817.0 C1239.9 817.8 1254.2 818.5 1259.5 821.0 C1264.8 823.5 1268.2 827.2 1271.5 832.0 C1274.8 836.8 1274.6 837.0 1279.5 850.0 C1284.4 863.0 1293.9 890.0 1301.1 910.0 C1308.3 930.0 1315.5 950.0 1322.7 970.0 C1329.9 990.0 1340.7 1020.0 1344.3 1030.0 M1285.4 670.5 C1292.9 663.8 1314.6 643.8 1330.4 630.5 C1346.3 617.2 1362.9 604.0 1380.4 590.5 C1397.9 577.0 1416.3 563.3 1435.4 549.5 C1454.6 535.7 1485.4 514.5 1495.4 507.5 M1267.3 718.5 C1274.8 711.8 1296.5 691.8 1312.3 678.5 C1328.1 665.2 1344.8 652.0 1362.3 638.5 C1379.8 625.0 1398.1 611.3 1417.3 597.5 C1436.5 583.7 1467.3 562.5 1477.3 555.5 M1261.9 766.5 C1269.4 759.8 1291.1 739.8 1306.9 726.5 C1322.8 713.2 1339.4 700.0 1356.9 686.5 C1374.4 673.0 1392.8 659.3 1411.9 645.5 C1431.1 631.7 1461.9 610.5 1471.9 603.5 M1272.9 814.5 C1280.4 807.8 1302.1 787.8 1317.9 774.5 C1333.7 761.2 1350.4 748.0 1367.9 734.5 C1385.4 721.0 1403.7 707.3 1422.9 693.5 C1442.1 679.7 1472.9 658.5 1482.9 651.5 M1294.0 862.5 C1301.5 855.8 1323.2 835.8 1339.0 822.5 C1354.8 809.2 1371.5 796.0 1389.0 782.5 C1406.5 769.0 1424.8 755.3 1444.0 741.5 C1463.2 727.7 1494.0 706.5 1504.0 699.5 M1311.5 910.5 C1319.0 903.8 1340.7 883.8 1356.5 870.5 C1372.3 857.2 1389.0 844.0 1406.5 830.5 C1424.0 817.0 1442.3 803.3 1461.5 789.5 C1480.7 775.7 1511.5 754.5 1521.5 747.5 M1326.5 958.5 C1334.0 951.8 1355.7 931.8 1371.5 918.5 C1387.3 905.2 1404.0 892.0 1421.5 878.5 C1439.0 865.0 1457.3 851.3 1476.5 837.5 C1495.7 823.7 1526.5 802.5 1536.5 795.5 M1333.5 1006.5 C1341.0 999.8 1362.7 979.8 1378.5 966.5 C1394.3 953.2 1411.0 940.0 1428.5 926.5 C1446.0 913.0 1464.3 899.3 1483.5 885.5 C1502.7 871.7 1533.5 850.5 1543.5 843.5 M1198.5 681.5 L1250.8 596.5 L1284.5 545.8 L1346.0 487.5 L1407.5 435.2 L1449.5 404.5 M1293.8 681.5 L1339.9 614.9 L1370.5 578.0 L1410.5 538.1 L1449.5 507.5 M1385.9 681.5 L1419.7 636.4 L1449.5 608.5 M1163.9 608.7 C1177.7 606.9 1222.8 598.8 1246.8 598.0 C1270.8 597.2 1292.8 600.9 1308.2 604.0 C1323.6 607.1 1330.2 610.8 1338.9 616.4 C1347.6 622.0 1352.8 626.8 1360.5 637.9 C1368.2 649.0 1377.7 667.1 1384.9 683.0 C1392.1 698.9 1396.6 713.0 1403.5 733.0 C1410.4 753.0 1419.0 780.5 1426.5 803.0 C1434.0 825.5 1444.8 857.2 1448.5 868.0" stroke="#b4824a" stroke-width="0.8" opacity="0.85"/><path d="M1155.0 42.0 L1115.3 63.3 L1089.8 98.6 L1058.4 151.6 L1027.0 212.3 L997.6 275.1 L970.2 333.9 L942.5 389.4 L917.7 440.6 L896.9 487.6 L878.9 529.0 M878.9 529.0 C876.8 535.0 869.6 553.2 866.0 565.0 C862.4 576.8 859.2 587.5 857.0 600.0 C854.8 612.5 853.7 633.3 853.0 640.0 M1222.0 20.0 L1205.4 41.8 L1176.0 84.9 L1142.7 141.8 L1105.5 208.4 L1064.3 275.1 L1023.1 341.7 L984.0 404.6 L948.0 462.7 L917.7 511.0 L890.0 551.0 M890.0 551.0 C887.0 557.5 876.7 576.8 872.0 590.0 C867.3 603.2 863.7 623.3 862.0 630.0 M1318.0 20.0 L1301.5 45.7 L1266.2 92.7 L1227.0 155.5 L1183.9 222.1 L1132.9 288.8 L1080.0 355.5 L1053.0 389.4 L1020.0 430.0 L989.5 471.0 L961.9 506.9 L936.0 538.0 M936.0 538.0 C932.0 543.0 919.8 557.4 912.1 567.7 C904.4 578.0 895.7 589.6 890.0 600.0 C884.3 610.4 880.0 625.0 878.0 630.0 M1403.0 20.0 L1389.7 45.7 L1350.5 112.3 L1307.4 177.0 L1252.5 241.7 L1189.8 304.5 L1125.1 371.1 L1064.1 433.7 L1033.7 465.5 L1006.1 494.5 L978.4 523.5 L955.0 550.0 M955.0 550.0 C950.6 554.8 937.0 568.8 928.7 578.8 C920.4 588.8 911.0 599.8 905.0 610.0 C899.0 620.2 895.0 635.0 893.0 640.0 M1447.0 112.0 L1429.0 137.8 L1385.8 202.5 L1323.1 269.2 L1252.5 333.9 L1181.9 396.6 L1147.1 426.8 L1112.5 455.8 L1080.7 484.8 L1047.6 511.1 L1022.7 534.6 L997.8 558.1 M997.8 558.1 C991.8 563.4 972.4 580.4 961.9 589.9 C951.4 599.4 942.6 606.6 935.0 615.0 C927.4 623.4 919.2 635.8 916.0 640.0 M1083.5 86.7 L1024.4 139.9 L996.7 184.5 L969.1 242.9 L946.1 296.6 L932.9 330.7 L926.7 361.4 L917.5 392.0 L908.3 422.8 L900.7 450.0 L888.0 490.0 L874.0 530.0 M874.0 530.0 L862.0 565.0 M1447.0 260.0 L1401.5 304.5 L1334.9 379.0 L1264.3 438.8 L1193.7 493.7 L1115.3 536.8 M1115.3 536.8 C1104.8 542.7 1070.2 560.3 1052.5 572.1 C1034.8 583.9 1020.6 596.1 1009.4 607.4 C998.1 618.7 990.9 630.9 985.0 640.0 C979.1 649.1 976.3 650.1 974.1 662.3 C971.9 674.5 970.2 698.4 972.0 713.0 C973.8 727.6 978.7 737.2 985.0 750.0 C991.3 762.8 1005.8 783.3 1010.0 790.0 M940.0 262.0 L922.0 300.0 L914.5 324.6 L911.4 350.7 L906.8 379.8 L900.7 407.4 L893.0 438.0 L880.0 480.0 L866.0 520.0 M925.0 272.0 L911.4 300.0 L902.2 330.7 L896.0 353.7 L891.0 370.0 M1116.7 60.4 L1155.0 50.0 L1205.4 41.8 L1301.5 45.7 L1389.7 59.4 L1447.0 75.0 M1020.0 119.0 L1089.8 98.6 L1176.0 84.9 L1266.2 92.7 L1350.5 112.3 L1429.0 137.8 L1447.0 145.0 M962.0 203.0 L996.7 184.5 L1058.4 151.6 L1142.7 141.8 L1227.0 155.5 L1307.4 177.0 L1385.8 202.5 L1447.0 234.0 M925.0 262.0 L969.1 242.9 L1027.0 212.3 L1105.5 208.4 L1183.9 222.1 L1252.5 241.7 L1323.1 269.2 L1401.5 304.5 L1447.0 328.0 M895.0 318.0 L946.1 296.6 L997.6 275.1 L1064.3 275.1 L1132.9 288.8 L1189.8 304.5 L1252.5 333.9 L1334.3 383.0 L1405.0 433.7 L1441.8 469.0 L1447.0 478.0 M893.0 379.8 L899.1 367.5 L908.3 356.8 L917.5 349.0 L929.8 341.4 L949.8 336.0 L969.7 333.0 L1003.5 336.8 L1025.0 340.7 L1050.0 347.6 L1078.0 356.3 L1125.0 371.5 L1196.0 403.3 L1263.7 439.9 L1343.5 486.0 L1386.5 515.0 L1408.0 536.6 L1447.0 570.0 M893.0 392.0 L900.7 389.0 L911.4 386.0 L926.7 386.0 L943.6 389.0 L983.5 402.8 L1026.5 419.7 L1064.1 433.7 L1112.5 455.8 L1193.0 492.0 L1282.0 544.3 L1340.4 561.2 L1368.0 576.5 L1392.6 598.0 L1417.2 634.9 L1447.0 680.0 M878.0 440.0 L893.0 432.0 L917.7 440.6 L948.0 462.7 L989.5 476.0 L1006.1 494.5 L1047.6 511.1 L1116.7 542.8 L1150.0 560.0 M858.0 430.0 C859.6 432.5 864.4 439.0 867.9 445.0 C871.4 451.0 874.1 458.6 878.9 466.0 C883.7 473.4 890.4 482.1 896.9 489.6 C903.4 497.1 910.5 504.0 917.6 511.0 C924.7 518.0 932.3 526.3 939.7 531.8 C947.1 537.3 952.2 539.8 961.9 544.2 C971.6 548.6 984.9 554.1 997.8 558.0 C1010.7 561.9 1021.8 562.9 1039.3 567.7 C1056.8 572.5 1092.2 583.8 1102.8 587.0 M851.0 560.0 C853.8 562.0 861.5 567.0 868.0 572.0 C874.5 577.0 882.2 585.3 890.0 590.0 C897.8 594.7 905.0 597.3 915.0 600.0 C925.0 602.7 935.8 605.0 950.0 606.0 C964.2 607.0 983.3 606.3 1000.0 606.0 C1016.7 605.7 1032.8 607.0 1050.0 604.0 C1067.2 601.0 1094.2 590.7 1103.0 588.0 M853.0 578.0 C856.2 580.3 855.8 588.3 872.0 592.0 C888.2 595.7 914.3 599.7 950.0 600.0 C985.7 600.3 1047.7 593.8 1086.0 594.0 C1124.3 594.2 1151.5 598.0 1180.0 601.0 C1208.5 604.0 1244.2 610.2 1257.0 612.0 M853.2 588.4 C856.6 591.2 857.2 599.8 873.8 605.2 C890.4 610.6 917.3 618.0 953.0 620.8 C988.7 623.6 1050.0 620.5 1088.0 622.0 C1126.0 623.5 1152.8 626.7 1181.0 629.6 C1209.2 632.5 1244.3 637.6 1257.0 639.2 M853.4 598.8 C857.1 602.1 858.5 611.3 875.6 618.4 C892.7 625.5 920.3 636.3 956.0 641.6 C991.7 646.9 1052.3 647.2 1090.0 650.0 C1127.7 652.8 1154.2 655.5 1182.0 658.2 C1209.8 660.9 1244.5 665.0 1257.0 666.4 M853.6 609.2 C857.6 612.9 859.8 622.7 877.4 631.6 C895.0 640.5 923.2 654.7 959.0 662.4 C994.8 670.1 1054.7 673.9 1092.0 678.0 C1129.3 682.1 1155.5 684.2 1183.0 686.8 C1210.5 689.4 1244.7 692.5 1257.0 693.6 M853.8 619.6 C858.0 623.8 861.2 634.2 879.2 644.8 C897.2 655.4 926.2 673.0 962.0 683.2 C997.8 693.4 1057.0 700.6 1094.0 706.0 C1131.0 711.4 1156.8 712.9 1184.0 715.4 C1211.2 717.9 1244.8 719.9 1257.0 720.8 M854.0 630.0 C858.5 634.7 862.5 645.7 881.0 658.0 C899.5 670.3 929.2 691.3 965.0 704.0 C1000.8 716.7 1059.3 727.3 1096.0 734.0 C1132.7 740.7 1158.2 741.7 1185.0 744.0 C1211.8 746.3 1245.0 747.3 1257.0 748.0 M854.2 640.4 C859.0 645.5 863.8 657.1 882.8 671.2 C901.8 685.3 932.1 709.7 968.0 724.8 C1003.9 739.9 1061.7 754.0 1098.0 762.0 C1134.3 770.0 1159.5 770.4 1186.0 772.6 C1212.5 774.8 1245.2 774.8 1257.0 775.2 M854.4 650.8 C859.4 656.4 865.2 668.6 884.6 684.4 C904.0 700.2 935.1 728.0 971.0 745.6 C1006.9 763.2 1064.0 780.7 1100.0 790.0 C1136.0 799.3 1160.8 799.1 1187.0 801.2 C1213.2 803.3 1245.3 802.2 1257.0 802.4 M854.6 661.2 C859.9 667.3 866.5 680.1 886.4 697.6 C906.3 715.1 938.1 746.3 974.0 766.4 C1009.9 786.5 1066.3 807.4 1102.0 818.0 C1137.7 828.6 1162.2 827.9 1188.0 829.8 C1213.8 831.7 1245.5 829.6 1257.0 829.6 M854.8 671.6 C860.4 678.1 867.8 691.5 888.2 710.8 C908.6 730.1 941.0 764.7 977.0 787.2 C1013.0 809.7 1068.7 834.1 1104.0 846.0 C1139.3 857.9 1163.5 856.6 1189.0 858.4 C1214.5 860.2 1245.7 857.1 1257.0 856.8 M855.0 682.0 C860.8 689.0 869.2 703.0 890.0 724.0 C910.8 745.0 944.0 783.0 980.0 808.0 C1016.0 833.0 1071.0 860.8 1106.0 874.0 C1141.0 887.2 1164.8 885.3 1190.0 887.0 C1215.2 888.7 1245.8 884.5 1257.0 884.0 M906.8 666.7 C906.4 672.4 903.3 688.8 904.7 700.8 C906.1 712.8 909.3 725.5 915.3 739.0 C921.3 752.5 936.6 774.8 940.9 782.0 M975.0 602.7 C974.3 613.4 971.1 650.4 970.8 666.7 C970.5 683.1 970.9 688.8 973.0 700.8 C975.1 712.8 977.6 725.5 983.6 739.0 C989.6 752.5 1000.5 769.2 1009.0 782.0 C1017.5 794.8 1028.0 806.3 1034.8 816.0 C1041.6 825.7 1047.5 836.0 1050.0 840.0 M1051.9 585.6 C1051.5 599.8 1049.7 651.1 1049.7 671.0 C1049.7 690.9 1051.2 692.9 1051.9 705.0 C1052.6 717.1 1051.2 732.2 1054.0 743.5 C1056.8 754.8 1060.8 763.8 1069.0 773.0 C1077.2 782.2 1093.0 789.0 1103.0 799.0 C1113.0 809.0 1122.5 821.5 1128.7 833.0 C1134.9 844.5 1138.1 862.2 1140.0 868.0 M1103.0 589.9 C1106.2 598.2 1117.7 623.6 1122.0 640.0 C1126.3 656.4 1128.3 675.0 1128.7 688.0 C1129.1 701.0 1126.5 707.9 1124.4 717.9 C1122.3 727.9 1115.2 737.0 1115.9 747.7 C1116.6 758.4 1119.5 771.9 1128.7 781.9 C1138.0 791.9 1161.5 797.5 1171.4 807.5 C1181.4 817.5 1184.5 829.9 1188.4 841.6 C1192.3 853.4 1193.9 871.9 1195.0 878.0 M1162.8 602.7 C1167.0 609.8 1182.3 630.8 1188.0 645.0 C1193.7 659.2 1198.3 672.3 1197.0 688.0 C1195.7 703.7 1184.2 723.4 1179.9 739.0 C1175.6 754.6 1170.7 770.5 1171.4 781.9 C1172.1 793.3 1175.7 799.0 1184.2 807.5 C1192.7 816.0 1214.1 823.1 1222.6 833.0 C1231.1 842.9 1233.3 861.3 1235.4 867.0 M1239.6 624.0 C1239.3 630.0 1238.7 647.2 1238.0 660.0 C1237.3 672.8 1237.3 686.9 1235.4 700.8 C1233.5 714.7 1228.9 730.0 1226.8 743.5 C1224.7 757.0 1220.5 772.0 1222.6 781.9 C1224.7 791.8 1233.9 797.3 1239.6 803.0 C1245.3 808.7 1250.8 810.7 1256.7 816.0 C1262.6 821.3 1272.0 831.8 1275.0 835.0 M1290.8 645.0 C1287.7 652.5 1277.0 675.7 1272.0 690.0 C1267.0 704.3 1263.5 716.9 1261.0 730.7 C1258.5 744.5 1256.0 761.6 1256.7 773.0 C1257.4 784.4 1261.1 789.5 1265.0 799.0 C1268.9 808.5 1277.5 824.8 1280.0 830.0 M940.0 620.0 C939.3 626.7 936.3 646.7 936.0 660.0 C935.7 673.3 935.7 686.7 938.0 700.0 C940.3 713.3 943.8 725.8 950.0 740.0 C956.2 754.2 970.8 777.5 975.0 785.0 M1012.0 600.0 C1011.7 610.0 1010.0 642.5 1010.0 660.0 C1010.0 677.5 1010.3 690.8 1012.0 705.0 C1013.7 719.2 1015.3 732.5 1020.0 745.0 C1024.7 757.5 1031.7 768.3 1040.0 780.0 C1048.3 791.7 1065.0 809.2 1070.0 815.0 M1085.0 640.0 C1085.5 650.0 1088.0 682.5 1088.0 700.0 C1088.0 717.5 1083.3 731.7 1085.0 745.0 C1086.7 758.3 1089.7 770.0 1098.0 780.0 C1106.3 790.0 1124.7 795.0 1135.0 805.0 C1145.3 815.0 1155.8 834.2 1160.0 840.0 M1103.0 588.0 L1162.0 604.0 L1208.4 558.0 L1282.0 544.3 M1147.0 634.9 L1223.8 634.9 L1279.0 641.0 L1312.8 650.2 L1334.3 680.0 M1257.0 612.0 C1264.8 612.2 1292.8 612.2 1304.0 613.0 C1315.2 613.8 1318.7 614.5 1324.0 617.0 C1329.3 619.5 1332.7 623.2 1336.0 628.0 C1339.3 632.8 1338.2 633.0 1344.0 646.0 C1349.8 659.0 1362.0 686.0 1371.0 706.0 C1380.0 726.0 1389.0 746.0 1398.0 766.0 C1407.0 786.0 1416.0 806.0 1425.0 826.0 C1434.0 846.0 1443.0 866.0 1452.0 886.0 C1461.0 906.0 1470.0 926.0 1479.0 946.0 C1488.0 966.0 1501.5 996.0 1506.0 1006.0 M1257.0 639.2 C1263.4 639.4 1285.7 639.4 1295.4 640.2 C1305.1 641.0 1310.1 641.7 1315.4 644.2 C1320.7 646.7 1324.1 650.4 1327.4 655.2 C1330.7 660.0 1329.7 660.2 1335.4 673.2 C1341.1 686.2 1352.9 713.2 1361.7 733.2 C1370.4 753.2 1379.2 773.2 1388.0 793.2 C1396.7 813.2 1405.5 833.2 1414.2 853.2 C1423.0 873.2 1431.8 893.2 1440.5 913.2 C1449.3 933.2 1458.0 953.2 1466.8 973.2 C1475.6 993.2 1488.7 1023.2 1493.1 1033.2 M1257.0 666.4 C1262.0 666.6 1278.5 666.6 1286.8 667.4 C1295.1 668.2 1301.5 668.9 1306.8 671.4 C1312.1 673.9 1315.5 677.6 1318.8 682.4 C1322.1 687.2 1321.2 687.4 1326.8 700.4 C1332.4 713.4 1343.8 740.4 1352.4 760.4 C1360.9 780.4 1369.4 800.4 1377.9 820.4 C1386.4 840.4 1395.0 860.4 1403.5 880.4 C1412.0 900.4 1420.5 920.4 1429.0 940.4 C1437.6 960.4 1450.3 990.4 1454.6 1000.4 M1257.0 693.6 C1260.5 693.8 1271.3 693.8 1278.2 694.6 C1285.1 695.4 1292.9 696.1 1298.2 698.6 C1303.5 701.1 1306.9 704.8 1310.2 709.6 C1313.5 714.4 1312.7 714.6 1318.2 727.6 C1323.7 740.6 1334.8 767.6 1343.0 787.6 C1351.3 807.6 1359.6 827.6 1367.9 847.6 C1376.2 867.6 1384.4 887.6 1392.7 907.6 C1401.0 927.6 1409.3 947.6 1417.6 967.6 C1425.8 987.6 1438.3 1017.6 1442.4 1027.6 M1257.0 720.8 C1259.1 721.0 1264.2 721.0 1269.6 721.8 C1275.0 722.6 1284.3 723.3 1289.6 725.8 C1294.9 728.3 1298.3 732.0 1301.6 736.8 C1304.9 741.6 1304.2 741.8 1309.6 754.8 C1315.0 767.8 1325.7 794.8 1333.7 814.8 C1341.8 834.8 1349.8 854.8 1357.8 874.8 C1365.9 894.8 1373.9 914.8 1382.0 934.8 C1390.0 954.8 1402.1 984.8 1406.1 994.8 M1257.0 748.0 C1257.7 748.2 1257.0 748.2 1261.0 749.0 C1265.0 749.8 1275.7 750.5 1281.0 753.0 C1286.3 755.5 1289.7 759.2 1293.0 764.0 C1296.3 768.8 1295.8 769.0 1301.0 782.0 C1306.2 795.0 1316.6 822.0 1324.4 842.0 C1332.2 862.0 1340.0 882.0 1347.8 902.0 C1355.6 922.0 1363.4 942.0 1371.2 962.0 C1379.0 982.0 1390.7 1012.0 1394.6 1022.0 M1257.0 775.2 C1256.2 775.4 1249.8 775.4 1252.4 776.2 C1255.0 777.0 1267.1 777.7 1272.4 780.2 C1277.7 782.7 1281.1 786.4 1284.4 791.2 C1287.7 796.0 1287.3 796.2 1292.4 809.2 C1297.5 822.2 1307.5 849.2 1315.1 869.2 C1322.6 889.2 1330.2 909.2 1337.8 929.2 C1345.3 949.2 1352.9 969.2 1360.4 989.2 C1368.0 1009.2 1379.3 1039.2 1383.1 1049.2 M1257.0 802.4 C1254.8 802.6 1242.7 802.6 1243.8 803.4 C1244.9 804.2 1258.5 804.9 1263.8 807.4 C1269.1 809.9 1272.5 813.6 1275.8 818.4 C1279.1 823.2 1278.8 823.4 1283.8 836.4 C1288.8 849.4 1298.4 876.4 1305.8 896.4 C1313.1 916.4 1320.4 936.4 1327.7 956.4 C1335.0 976.4 1346.0 1006.4 1349.7 1016.4 M1257.0 829.6 C1253.4 829.8 1235.5 829.8 1235.2 830.6 C1234.9 831.4 1249.9 832.1 1255.2 834.6 C1260.5 837.1 1263.9 840.8 1267.2 845.6 C1270.5 850.4 1270.3 850.6 1275.2 863.6 C1280.1 876.6 1289.4 903.6 1296.4 923.6 C1303.5 943.6 1310.6 963.6 1317.7 983.6 C1324.8 1003.6 1335.4 1033.6 1338.9 1043.6 M1282.9 668.0 C1290.4 661.3 1312.1 641.3 1327.9 628.0 C1343.8 614.7 1360.4 601.5 1377.9 588.0 C1395.4 574.5 1413.8 560.8 1432.9 547.0 C1452.1 533.2 1482.9 512.0 1492.9 505.0 M1271.7 692.0 C1279.2 685.3 1300.9 665.3 1316.7 652.0 C1332.6 638.7 1349.2 625.5 1366.7 612.0 C1384.2 598.5 1402.6 584.8 1421.7 571.0 C1440.9 557.2 1471.7 536.0 1481.7 529.0 M1264.8 716.0 C1272.3 709.3 1294.0 689.3 1309.8 676.0 C1325.6 662.7 1342.3 649.5 1359.8 636.0 C1377.3 622.5 1395.6 608.8 1414.8 595.0 C1434.0 581.2 1464.8 560.0 1474.8 553.0 M1260.0 740.0 C1267.5 733.3 1289.2 713.3 1305.0 700.0 C1320.8 686.7 1337.5 673.5 1355.0 660.0 C1372.5 646.5 1390.8 632.8 1410.0 619.0 C1429.2 605.2 1460.0 584.0 1470.0 577.0 M1259.4 764.0 C1266.9 757.3 1288.6 737.3 1304.4 724.0 C1320.3 710.7 1336.9 697.5 1354.4 684.0 C1371.9 670.5 1390.3 656.8 1409.4 643.0 C1428.6 629.2 1459.4 608.0 1469.4 601.0 M1260.0 788.0 C1267.5 781.3 1289.1 761.3 1305.0 748.0 C1320.8 734.7 1337.5 721.5 1355.0 708.0 C1372.5 694.5 1390.8 680.8 1410.0 667.0 C1429.1 653.2 1460.0 632.0 1470.0 625.0 M1270.4 812.0 C1277.9 805.3 1299.6 785.3 1315.4 772.0 C1331.2 758.7 1347.9 745.5 1365.4 732.0 C1382.9 718.5 1401.2 704.8 1420.4 691.0 C1439.6 677.2 1470.4 656.0 1480.4 649.0 M1281.4 836.0 C1288.9 829.3 1310.6 809.3 1326.4 796.0 C1342.2 782.7 1358.9 769.5 1376.4 756.0 C1393.9 742.5 1412.2 728.8 1431.4 715.0 C1450.6 701.2 1481.4 680.0 1491.4 673.0 M1291.5 860.0 C1299.0 853.3 1320.7 833.3 1336.5 820.0 C1352.3 806.7 1369.0 793.5 1386.5 780.0 C1404.0 766.5 1422.3 752.8 1441.5 739.0 C1460.7 725.2 1491.5 704.0 1501.5 697.0 M1300.8 884.0 C1308.3 877.3 1330.0 857.3 1345.8 844.0 C1361.7 830.7 1378.3 817.5 1395.8 804.0 C1413.3 790.5 1431.7 776.8 1450.8 763.0 C1470.0 749.2 1500.8 728.0 1510.8 721.0 M1309.0 908.0 C1316.5 901.3 1338.2 881.3 1354.0 868.0 C1369.8 854.7 1386.5 841.5 1404.0 828.0 C1421.5 814.5 1439.8 800.8 1459.0 787.0 C1478.2 773.2 1509.0 752.0 1519.0 745.0 M1316.7 932.0 C1324.2 925.3 1345.8 905.3 1361.7 892.0 C1377.5 878.7 1394.2 865.5 1411.7 852.0 C1429.2 838.5 1447.5 824.8 1466.7 811.0 C1485.8 797.2 1516.7 776.0 1526.7 769.0 M1324.0 956.0 C1331.5 949.3 1353.2 929.3 1369.0 916.0 C1384.8 902.7 1401.5 889.5 1419.0 876.0 C1436.5 862.5 1454.8 848.8 1474.0 835.0 C1493.2 821.2 1524.0 800.0 1534.0 793.0 M1331.0 980.0 C1338.5 973.3 1360.2 953.3 1376.0 940.0 C1391.8 926.7 1408.5 913.5 1426.0 900.0 C1443.5 886.5 1461.8 872.8 1481.0 859.0 C1500.2 845.2 1531.0 824.0 1541.0 817.0 M1331.0 1004.0 C1338.5 997.3 1360.2 977.3 1376.0 964.0 C1391.8 950.7 1408.5 937.5 1426.0 924.0 C1443.5 910.5 1461.8 896.8 1481.0 883.0 C1500.2 869.2 1531.0 848.0 1541.0 841.0 M1196.0 680.0 L1248.3 595.0 L1282.0 544.3 L1343.5 486.0 L1405.0 433.7 L1447.0 403.0 M1291.3 680.0 L1337.4 613.4 L1368.0 576.5 L1408.0 536.6 L1447.0 506.0 M1383.4 680.0 L1417.2 634.9 L1447.0 607.0 M1162.4 605.7 C1176.2 603.9 1221.2 595.8 1245.3 595.0 C1269.3 594.2 1291.3 597.9 1306.7 601.0 C1322.1 604.1 1328.7 607.8 1337.4 613.4 C1346.1 619.0 1351.3 623.8 1359.0 634.9 C1366.7 646.0 1376.2 664.1 1383.4 680.0 C1390.6 695.9 1395.1 710.0 1402.0 730.0 C1408.9 750.0 1417.5 777.5 1425.0 800.0 C1432.5 822.5 1443.3 854.2 1447.0 865.0 M861.2 365.7 C859.4 366.1 853.6 367.4 850.4 368.0 C847.1 368.7 844.6 369.2 841.7 369.8 C838.8 370.3 835.5 370.8 833.1 371.4 C830.6 371.9 828.6 372.3 826.8 372.9 C825.0 373.5 823.8 374.0 822.4 374.9 C821.0 375.7 819.5 376.8 818.5 378.0 C817.5 379.2 816.8 380.4 816.3 382.3 C815.9 384.1 815.5 387.3 815.7 389.1 C815.8 390.9 816.4 391.8 817.1 393.2 C817.7 394.5 818.7 395.9 819.7 397.2 C820.7 398.6 821.8 399.9 823.1 401.2 C824.4 402.6 826.3 404.0 827.7 405.4 C829.0 406.7 829.9 407.9 831.0 409.3 C832.1 410.6 832.9 411.5 834.3 413.5 C835.6 415.6 838.2 420.2 839.0 421.6 M863.8 367.6 C862.1 368.0 856.8 369.2 853.9 369.8 C850.9 370.5 848.6 370.9 846.0 371.4 C843.3 371.9 840.3 372.4 838.0 372.9 C835.8 373.4 834.0 373.8 832.4 374.3 C830.7 374.9 829.5 375.4 828.3 376.2 C827.0 377.0 825.6 378.0 824.7 379.1 C823.8 380.3 823.2 381.4 822.7 383.1 C822.3 384.9 822.0 387.8 822.1 389.5 C822.3 391.2 822.8 392.1 823.4 393.3 C824.0 394.6 824.9 395.9 825.8 397.2 C826.7 398.4 827.7 399.6 829.0 400.9 C830.2 402.2 831.9 403.5 833.1 404.8 C834.3 406.0 835.2 407.2 836.2 408.4 C837.2 409.7 837.9 410.5 839.1 412.4 C840.4 414.3 842.8 418.7 843.5 420.0 M866.7 369.8 C865.2 370.1 860.4 371.2 857.8 371.8 C855.1 372.4 853.1 372.8 850.7 373.3 C848.4 373.8 845.7 374.2 843.7 374.7 C841.6 375.1 840.0 375.5 838.6 376.0 C837.1 376.5 836.1 377.0 834.9 377.7 C833.8 378.5 832.5 379.4 831.7 380.4 C830.9 381.5 830.4 382.5 830.0 384.1 C829.6 385.7 829.3 388.4 829.4 390.0 C829.5 391.6 830.0 392.4 830.6 393.5 C831.1 394.7 831.9 395.9 832.7 397.1 C833.5 398.2 834.4 399.3 835.5 400.5 C836.6 401.7 838.2 403.0 839.2 404.1 C840.3 405.3 841.1 406.3 842.0 407.5 C842.9 408.7 843.6 409.4 844.6 411.2 C845.7 412.9 847.9 417.0 848.5 418.1 M869.9 372.2 C868.6 372.5 864.5 373.5 862.2 374.0 C859.8 374.6 858.1 374.9 856.0 375.4 C854.0 375.8 851.6 376.2 849.9 376.6 C848.1 377.0 846.7 377.4 845.5 377.8 C844.2 378.3 843.3 378.7 842.3 379.4 C841.3 380.1 840.2 380.9 839.5 381.8 C838.8 382.8 838.3 383.7 838.0 385.2 C837.7 386.7 837.5 389.1 837.5 390.6 C837.6 392.0 838.1 392.7 838.5 393.8 C839.0 394.8 839.7 395.9 840.4 397.0 C841.1 398.0 841.9 399.0 842.8 400.1 C843.8 401.2 845.1 402.3 846.1 403.4 C847.0 404.4 847.6 405.4 848.4 406.4 C849.2 407.5 849.8 408.2 850.7 409.8 C851.7 411.4 853.5 415.1 854.1 416.1 M873.4 374.8 C872.3 375.1 868.9 376.0 867.0 376.5 C865.0 376.9 863.6 377.3 861.9 377.6 C860.1 378.0 858.2 378.4 856.7 378.8 C855.3 379.1 854.1 379.4 853.0 379.8 C852.0 380.2 851.2 380.6 850.4 381.2 C849.6 381.8 848.7 382.6 848.1 383.4 C847.5 384.3 847.1 385.1 846.8 386.4 C846.6 387.7 846.4 389.9 846.5 391.2 C846.5 392.4 846.9 393.1 847.3 394.0 C847.7 395.0 848.2 395.9 848.8 396.9 C849.4 397.8 850.1 398.7 850.9 399.6 C851.6 400.6 852.8 401.6 853.5 402.6 C854.3 403.5 854.9 404.3 855.5 405.3 C856.2 406.2 856.7 406.8 857.5 408.3 C858.2 409.7 859.8 412.9 860.3 413.9 M877.2 377.7 C876.4 377.9 873.7 378.7 872.2 379.1 C870.7 379.5 869.5 379.8 868.2 380.1 C866.9 380.5 865.4 380.8 864.2 381.1 C863.1 381.4 862.2 381.7 861.3 382.0 C860.5 382.4 859.9 382.7 859.3 383.2 C858.6 383.7 857.9 384.4 857.5 385.1 C857.0 385.9 856.7 386.6 856.5 387.7 C856.3 388.8 856.1 390.7 856.2 391.8 C856.2 392.9 856.5 393.5 856.8 394.3 C857.1 395.1 857.6 395.9 858.0 396.7 C858.5 397.6 859.0 398.3 859.6 399.1 C860.2 400.0 861.1 400.9 861.7 401.7 C862.3 402.5 862.8 403.2 863.3 404.0 C863.8 404.8 864.2 405.4 864.8 406.6 C865.4 407.8 866.6 410.6 867.0 411.5 M881.4 380.8 C880.8 381.0 878.9 381.6 877.9 382.0 C876.8 382.3 876.0 382.6 875.1 382.8 C874.2 383.1 873.1 383.4 872.3 383.7 C871.5 383.9 870.9 384.1 870.3 384.4 C869.7 384.7 869.3 385.0 868.9 385.4 C868.4 385.8 867.9 386.4 867.6 387.0 C867.3 387.6 867.1 388.2 866.9 389.1 C866.8 390.0 866.7 391.6 866.7 392.5 C866.7 393.4 866.9 393.9 867.1 394.6 C867.4 395.3 867.7 395.9 868.0 396.6 C868.3 397.3 868.7 397.9 869.1 398.6 C869.5 399.3 870.1 400.0 870.6 400.7 C871.0 401.4 871.3 402.0 871.6 402.7 C872.0 403.3 872.3 403.8 872.7 404.8 C873.1 405.8 874.0 408.2 874.2 408.8 M890.3 356.5 L890.9 387.9 M871.6 361.5 L888.7 388.9 M859.0 364.0 L887.2 389.4 M847.3 366.5 L885.8 389.9 M838.0 368.3 L884.6 390.3 M828.7 370.0 L883.5 390.6 M822.0 371.6 L882.7 390.9 M817.2 373.7 L882.1 391.3 M813.0 377.0 L881.6 392.0 M810.7 381.5 L881.4 392.9 M810.0 388.7 L881.3 394.3 M811.5 393.0 L881.5 395.2 M814.3 397.3 L881.8 396.1 M818.0 401.5 L882.2 396.9 M822.9 405.9 L882.8 397.8 M826.5 410.0 L883.3 398.6 M830.0 414.5 L883.7 399.5 M835.1 423.0 L884.3 401.2 M837.2 431.7 L884.5 402.9 M831.0 404.0 C834.0 406.3 842.7 412.3 849.0 418.0 C855.3 423.7 862.0 430.0 869.0 438.0 C876.0 446.0 883.3 455.7 891.0 466.0 C898.7 476.3 911.0 494.3 915.0 500.0 M831.0 416.5 C834.0 418.8 842.7 424.8 849.0 430.5 C855.3 436.2 862.0 442.5 869.0 450.5 C876.0 458.5 883.3 468.2 891.0 478.5 C898.7 488.8 911.0 506.8 915.0 512.5 M831.0 429.0 C834.0 431.3 842.7 437.3 849.0 443.0 C855.3 448.7 862.0 455.0 869.0 463.0 C876.0 471.0 883.3 480.7 891.0 491.0 C898.7 501.3 911.0 519.3 915.0 525.0 M828.0 441.5 C831.0 443.8 839.7 449.8 846.0 455.5 C852.3 461.2 859.0 467.5 866.0 475.5 C873.0 483.5 880.3 493.2 888.0 503.5 C895.7 513.8 908.0 531.8 912.0 537.5 M828.0 454.0 C831.0 456.3 839.7 462.3 846.0 468.0 C852.3 473.7 859.0 480.0 866.0 488.0 C873.0 496.0 880.3 505.7 888.0 516.0 C895.7 526.3 908.0 544.3 912.0 550.0 M828.0 466.5 C831.0 468.8 839.7 474.8 846.0 480.5 C852.3 486.2 859.0 492.5 866.0 500.5 C873.0 508.5 880.3 518.2 888.0 528.5 C895.7 538.8 908.0 556.8 912.0 562.5 M828.0 479.0 C831.0 481.3 839.7 487.3 846.0 493.0 C852.3 498.7 859.0 505.0 866.0 513.0 C873.0 521.0 880.3 530.7 888.0 541.0 C895.7 551.3 908.0 569.3 912.0 575.0 M828.0 491.5 C831.0 493.8 839.7 499.8 846.0 505.5 C852.3 511.2 859.0 517.5 866.0 525.5 C873.0 533.5 880.3 543.2 888.0 553.5 C895.7 563.8 908.0 581.8 912.0 587.5 M828.0 504.0 C831.0 506.3 839.7 512.3 846.0 518.0 C852.3 523.7 859.0 530.0 866.0 538.0 C873.0 546.0 880.3 555.7 888.0 566.0 C895.7 576.3 908.0 594.3 912.0 600.0 M828.0 516.5 C831.0 518.8 839.7 524.8 846.0 530.5 C852.3 536.2 859.0 542.5 866.0 550.5 C873.0 558.5 880.3 568.2 888.0 578.5 C895.7 588.8 908.0 606.8 912.0 612.5 M828.0 529.0 C831.0 531.3 839.7 537.3 846.0 543.0 C852.3 548.7 859.0 555.0 866.0 563.0 C873.0 571.0 880.3 580.7 888.0 591.0 C895.7 601.3 908.0 619.3 912.0 625.0 M828.0 541.5 C831.0 543.8 839.7 549.8 846.0 555.5 C852.3 561.2 859.0 567.5 866.0 575.5 C873.0 583.5 880.3 593.2 888.0 603.5 C895.7 613.8 908.0 631.8 912.0 637.5 M846.0 404.0 C843.7 410.3 836.3 427.8 832.0 442.0 C827.7 456.2 823.0 472.8 820.0 489.0 C817.0 505.2 814.7 521.5 814.0 539.0 C813.3 556.5 815.7 584.8 816.0 594.0 M857.5 406.0 C855.2 412.3 847.8 429.8 843.5 444.0 C839.2 458.2 834.5 474.8 831.5 491.0 C828.5 507.2 826.2 523.5 825.5 541.0 C824.8 558.5 827.2 586.8 827.5 596.0 M869.0 408.0 C866.7 414.3 859.3 431.8 855.0 446.0 C850.7 460.2 846.0 476.8 843.0 493.0 C840.0 509.2 837.7 525.5 837.0 543.0 C836.3 560.5 838.7 588.8 839.0 598.0 M880.5 410.0 C878.2 416.3 870.8 433.8 866.5 448.0 C862.2 462.2 857.5 478.8 854.5 495.0 C851.5 511.2 849.2 527.5 848.5 545.0 C847.8 562.5 850.2 590.8 850.5 600.0 M892.0 412.0 C889.7 418.3 882.3 435.8 878.0 450.0 C873.7 464.2 869.0 480.8 866.0 497.0 C863.0 513.2 860.7 529.5 860.0 547.0 C859.3 564.5 861.7 592.8 862.0 602.0 M903.5 414.0 C901.2 420.3 893.8 437.8 889.5 452.0 C885.2 466.2 880.5 482.8 877.5 499.0 C874.5 515.2 872.2 531.5 871.5 549.0 C870.8 566.5 873.2 594.8 873.5 604.0 M915.0 416.0 C912.7 422.3 905.3 439.8 901.0 454.0 C896.7 468.2 892.0 484.8 889.0 501.0 C886.0 517.2 883.7 533.5 883.0 551.0 C882.3 568.5 884.7 596.8 885.0 606.0 M926.5 418.0 C924.2 424.3 916.8 441.8 912.5 456.0 C908.2 470.2 903.5 486.8 900.5 503.0 C897.5 519.2 895.2 535.5 894.5 553.0 C893.8 570.5 896.2 598.8 896.5 608.0 M938.0 420.0 C935.7 426.3 928.3 443.8 924.0 458.0 C919.7 472.2 915.0 488.8 912.0 505.0 C909.0 521.2 906.7 537.5 906.0 555.0 C905.3 572.5 907.7 600.8 908.0 610.0" stroke="#b27838" stroke-width="0.9"/></g></g>
<use href="#headpath" fill="none" stroke="#e8923a" stroke-width="1.6" stroke-linejoin="round"/>
<path id="earcrease" d="M889 386 C887 392 884 398 878 404 C882 399 886 394 889 386Z" fill="#8a3a10" stroke="#8a3a10" stroke-width="1.5"/>
<path d="M1244 874 L1252 881 L1262 883 L1272 878 L1279 867 L1280 857 L1270 861Z" fill="#f3e0d6" stroke="#d8c0b0" stroke-width="0.8"/>
<path d="M995.2 809.9 L1013.7 821.8 L1032.0 831.0 L1060.0 845.5 L1093.7 858.0 L1121.4 864.5 L1143.5 867.0 L1179.4 875.5 L1234.7 877.5 L1284.5 849.5 L1283.0 845.0 L1233.5 872.3 L1180.0 870.5 L1145.0 862.0 L1123.0 859.5 L1096.0 853.0 L1063.0 840.5 L1036.0 826.5 L1018.0 817.0Z" fill="#7a2e0c"/>
<path d="M995.2 809.9 L1013.7 821.8 L1032.0 831.0 L1060.0 845.5 L1093.7 858.0 L1121.4 864.5 L1143.5 867.0 L1179.4 875.5 L1234.7 877.5 L1284.5 849.5" fill="none" stroke="#f0952e" stroke-width="1.3"/>
<path d="M1283.0 845.0 L1233.5 872.3 L1180.0 870.5 L1145.0 862.0 L1123.0 859.5 L1096.0 853.0 L1063.0 840.5 L1036.0 826.5 L1018.0 817.0" fill="none" stroke="#f0952e" stroke-width="1"/>
<path d="M1277.8 826.0 L1287.5 850.7 L1301.3 886.7 L1312.4 919.8 L1323.4 955.8 L1330.4 977.0 L1336.0 977.0 L1328.0 952.0 L1317.0 918.0 L1306.0 886.0 L1292.0 852.0 L1283.0 835.0Z" fill="#7a2e0c"/>
<path d="M1277.8 826.0 L1287.5 850.7 L1301.3 886.7 L1312.4 919.8 L1323.4 955.8 L1330.4 977.0 M1336.0 977.0 L1328.0 952.0 L1317.0 918.0 L1306.0 886.0 L1292.0 852.0 L1283.0 835.0" fill="none" stroke="#f0952e" stroke-width="1.2"/>
<path d="M850.7 640.0 L854.6 658.3 L865.3 676.7 L880.7 693.6 L896.0 710.5 L906.7 725.9 L919.0 741.2 L925.2 750.0 L940.0 767.5 L958.4 784.0 L976.8 797.9 L995.2 809.9 L997.0 807.5 L978.5 795.3 L960.3 781.5 L943.5 764.0 L929.0 747.0 L922.5 738.0 L910.5 723.0 L900.0 707.5 L885.0 691.0 L870.0 674.5 L859.5 657.0 L855.5 640.0Z" fill="#7a2e0c" opacity="0.85"/>
<path d="M850.7 640.0 L854.6 658.3 L865.3 676.7 L880.7 693.6 L896.0 710.5 L906.7 725.9 L919.0 741.2 L925.2 750.0 L940.0 767.5 L958.4 784.0 L976.8 797.9 L995.2 809.9" fill="none" stroke="#f0952e" stroke-width="1.2"/>
<circle cx="1161" cy="537" r="26" fill="none" stroke="#fff" stroke-width="1.2" opacity="0.9"/>
<path d="M1082 574 L1152 541" stroke="#ffd0d8" stroke-width="1" opacity="0.8"/>
<g stroke="#111" stroke-width="1" fill="#fff"><rect x="1151.500" y="535.5" width="6" height="2.4" rx="1"/><rect x="1166.500" y="535.5" width="6" height="2.4" rx="1"/><rect x="1161" y="527.5" width="2.4" height="5" rx="1"/><rect x="1161" y="541.5" width="2.4" height="5" rx="1"/><circle cx="1162.200" cy="536.8" r="1.6"/></g>
</svg>

<div class="hdr" style="width:651px;background:rgba(45,45,45,0.0)"></div>
<div class="abs" style="left:0;top:0;width:652px;height:37px;background:rgba(56,56,56,0.93)"></div>
<!-- top row -->
<div class="abs md" style="left:8px;top:-8px;width:29px;height:16px;border-radius:3px"></div>
<div class="abs md" style="left:45px;top:-8px;width:108px;height:16px;border-radius:3px"></div>
<div class="t" style="left:70px;top:-8px">Texture Paint</div>
<div class="abs bl" style="left:160px;top:-8px;width:18px;height:16px;border-radius:3px"></div>
<div class="t" style="left:192px;top:-8px">View</div>
<div class="t" style="left:232px;top:-8px">Select</div>
<div class="abs md" style="left:527px;top:-8px;width:30px;height:16px;border-radius:3px"></div>
<div class="abs bl" style="left:564px;top:-8px;width:18px;height:16px;border-radius:3px 0 0 3px"></div>
<div class="abs md" style="left:582px;top:-8px;width:21px;height:16px;border-radius:0 3px 3px 0"></div>
<div class="abs bl" style="left:609px;top:-8px;width:18px;height:16px;border-radius:3px 0 0 3px"></div>
<div class="abs md" style="left:627px;top:-8px;width:30px;height:16px"></div>
<!--RTOPICONS-->
<!-- tool settings row -->
<div class="w md" style="left:43px;width:31px;border-radius:3px 0 0 3px;border:1px solid #3a3a3a"></div>
<div class="w dk" style="left:74px;width:119px;border-radius:0 3px 3px 0;border:1px solid #3a3a3a;border-left:none"></div>
<div class="t" style="left:81px;top:19px">TexDraw</div>
<div class="w" style="left:200px;width:36px;background:#dc959b;border-radius:3px 0 0 3px"></div>
<div class="w" style="left:236px;width:36px;background:#fff;border-radius:0 3px 3px 0"></div>
<div class="w md" style="left:285px;width:98px;top:18px;height:16px"></div>
<div class="t" style="left:292px;top:19px">Mix</div>
<div class="w gr" style="left:390px;width:149px"></div>
<div class="w bl" style="left:390px;width:13px;border-radius:3px 0 0 3px"></div>
<div class="abs" style="left:517px;top:17px;width:1px;height:18px;background:#3a3a3a"></div>
<div class="t" style="left:406px;top:19px">Radius</div>
<div class="t" style="left:474px;top:19px">53 px</div>
<div class="w bl" style="left:544px;width:157px"></div>
<div class="t" style="left:560px;top:19px">Strength</div>
<div class="t" style="left:637px;top:19px">1.000</div>
<svg style="left:0;top:0" width="651" height="40" viewBox="796 0 651 40">
<circle cx="853.500" cy="26.200" r="6.600" fill="url(#sph)"/>
<path d="M851 22.500 l2 -1 l1 3 l2 1 l-0.500 3 l-2.500 0.500 l-1.500 -2.500z" fill="#b0b0b0" opacity="0.7"/>
<g fill="none" stroke="#e6e6e6" stroke-width="1.400" stroke-linecap="round" stroke-linejoin="round">
<path d="M1170.500 25.200 l3 3 l3 -3"/>
<path d="M824 -1.500 l3.500 3.500 l3.500 -3.500"/>
<path d="M938 -1.500 l3.500 3.500 l3.500 -3.500"/>
<path d="M1343.500 -1.500 l3.500 3.500 l3.500 -3.500"/>
<path d="M1384.500 -1.500 l3.500 3.500 l3.500 -3.500"/>
<path d="M1430.500 -1.500 l3.500 3.500 l3.500 -3.500"/>
</g>
<use href="#pen" x="802"/>
<!-- top-row partial icons -->
<path d="M808 2.500 h14 M811.500 -3 v9 M818.500 -3 v9" stroke="#cfcfcf" stroke-width="1.200" fill="none"/>
<path d="M846 -2 h11 v5 h-2.500 v1.500 h-2 v-1.500 h-2 v2.500 h-2 v-2.500 h-2.500z" fill="#cfcfcf"/>
<path d="M959.500 -3 h8 v8.500 h-8z" fill="#fff"/>
<path d="M967.500 -2 h3 v9.500 h-9 v-2" fill="none" stroke="#cfe0ff" stroke-width="1.200"/>
<path d="M1326 -3 l7 6.500 l-3.500 0.500 l-1.500 3.500z" fill="#fff"/>
<circle cx="1365" cy="4.800" r="1.800" fill="none" stroke="#fff" stroke-width="1.100"/>
<path d="M1366.500 3.500 C1370 1 1371.500 -2 1371.500 -4 M1371.500 -4 C1372 0 1374 4 1377 6" fill="none" stroke="#fff" stroke-width="1.100"/>
<circle cx="1412.500" cy="1" r="5.500" fill="none" stroke="#fff" stroke-width="1.200"/>
<circle cx="1418" cy="-1" r="4.500" fill="#fff"/>
</svg>

<!-- toolbar -->
<svg style="left:0;top:0" width="120" height="340" viewBox="796 0 120 340">
<g fill="none" stroke="#0c0c0c" stroke-width="0.9">
<path d="M844.2 90 L860.6 81 L858.5 150 L856.5 200 L844.2 267"/>
<path d="M801.6 154.800 L796 180 L803.2 229 L810.6 257 L813.9 262"/>
</g>
<!-- button backgrounds -->
<path d="M803.200 51 a3 3 0 0 1 3-3 h34.500 a3 3 0 0 1 3 3 v30.500 h-40.500z" fill="#4772b3"/>
<rect x="803.200" y="82" width="40.500" height="34.200" fill="#2b2b2b"/>
<rect x="803.200" y="116.800" width="40.500" height="34.200" fill="#2b2b2b"/>
<rect x="803.200" y="151.600" width="40.500" height="34.200" fill="#2b2b2b"/>
<rect x="803.200" y="186.400" width="40.500" height="34.200" fill="#2b2b2b"/>
<path d="M803.200 221.200 h40.500 v31.500 a3 3 0 0 1 -3 3 h-34.500 a3 3 0 0 1 -3 -3z" fill="#2b2b2b"/>
<path d="M803.200 266.300 a3 3 0 0 1 3-3 h34.500 a3 3 0 0 1 3 3 v29.700 h-40.500z" fill="#2b2b2b"/>
<path d="M803.200 296.600 h40.500 v30 a3 3 0 0 1 -3 3 h-34.500 a3 3 0 0 1 -3 -3z" fill="#2b2b2b"/>
<g stroke="#3c3c3c" stroke-width="0.8"><path d="M803.200 116.500h40.500M803.200 151.300h40.500M803.200 186.100h40.500M803.200 220.900h40.500M803.200 296.300h40.500"/></g>
<!-- 1 brush -->
<g>
<ellipse cx="822" cy="71.800" rx="7.200" ry="1.700" fill="#7088b8" opacity="0.85"/>
<path d="M829.300 54.300 C830.500 53.500 832.300 55 831.600 56.300 L822.600 68.600 L818.600 65.800Z" fill="#e4efff"/>
<path d="M818.800 65.200 C815.500 64.800 812.800 67.300 811 70.300 C814.200 71.800 820 72.300 822.300 68.300Z" fill="#dcebff"/>
</g>
<!-- 2 soften drop -->
<path d="M813.800 97.500 C813 111.500 831.300 111.500 830.500 97.500 C829.500 103 826 104.500 822.150 104.500 C818.300 104.500 814.800 103 813.800 97.500Z" fill="#9a9a9a"/>
<path d="M822.150 88.300 C824.800 92.300 828 95.500 828 98.800 A5.850 5.850 0 0 1 816.300 98.800 C816.300 95.500 819.500 92.300 822.150 88.300Z" fill="#e6e6e6"/>
<!-- 3 smear -->
<path d="M818 127 L823 123.500 L828.500 125 L830.500 130 L829 137.500 L825.500 138.500 L822.500 134.500 L817.500 139.500 L815.500 137.500 L820 132.500Z" fill="#e6e6e6"/>
<path d="M815.500 141.500 h13.500 v1.800 h-13.500z" fill="#9a9a9a"/>
<!-- 4 clone stamp -->
<circle cx="822.500" cy="161" r="3.300" fill="#e6e6e6"/>
<path d="M820.800 163 h3.400 l0.800 4.500 h4.500 v3.300 h-14 v-3.300 h4.500z" fill="#e6e6e6"/>
<path d="M815.500 172 h14 v1.500 h-14z" fill="#e6e6e6"/>
<path d="M814.500 174.800 h16 v1.700 h-16z" fill="#9a9a9a"/>
<!-- 5 fill bucket -->
<path d="M824 195.500 L832 203.500 L824.500 210.500 L816.500 203Z" fill="none" stroke="#e6e6e6" stroke-width="1.5" stroke-linejoin="round"/>
<path d="M818.500 203.200 L830 203.800 L824.500 209Z" fill="#e6e6e6"/>
<path d="M824.300 194 v6" stroke="#e6e6e6" stroke-width="1.200"/>
<path d="M815 205.500 C816.500 208 818 209.500 818 211 A3 3 0 0 1 812 211 C812 209.500 813.500 208 815 205.500Z" fill="#9a9a9a"/>
<!-- 6 mask -->
<rect x="815" y="235.300" width="11" height="11" fill="#9a9a9a"/>
<rect x="820.500" y="230" width="10.500" height="10.500" fill="#2b2b2b" stroke="#e6e6e6" stroke-width="1.300"/>
<path d="M822.500 232 h7 v7 C829 235 826.500 232.500 822.500 232Z" fill="#e6e6e6"/>
<!-- 7 select box -->
<rect x="811.500" y="268.500" width="21.500" height="22" fill="none" stroke="#d9c48a" stroke-width="1.300" stroke-dasharray="4.200 2"/>
<path d="M819 273 L828.500 280.500 L823.500 281.200 L820.500 286Z" fill="#fff"/>
<path d="M842.500 290 v4.500 h-4.500z" fill="#8a8a8a"/>
<!-- 8 annotate -->
<path d="M812 321 L813.500 317 L825.500 304.500 L828.500 307.500 L816.500 320Z" fill="#e6e6e6"/>
<path d="M826 303.800 L827.300 302.500 C828 302 828.800 302.200 829.500 303 L830.300 304 C830.800 304.800 830.800 305.500 830.200 306 L829 307Z" fill="#e6e6e6"/>
<path d="M812 322.500 C816 325.500 819.500 323 823 319.500 C826.500 316 831 317 834 321.500" fill="none" stroke="#8fd3c0" stroke-width="1.300"/>
<path d="M842.500 323.500 v4.500 h-4.500z" fill="#8a8a8a"/>
</svg>

<div class="t" style="left:66px;top:49px;color:#fff;text-shadow:0 0 2px #000,1px 1px 1px #000">User Perspective</div>
<div class="t" style="left:66px;top:67px;color:#fff;text-shadow:0 0 2px #000,1px 1px 1px #000">(48) Plane</div>
</div>
</body></html>
